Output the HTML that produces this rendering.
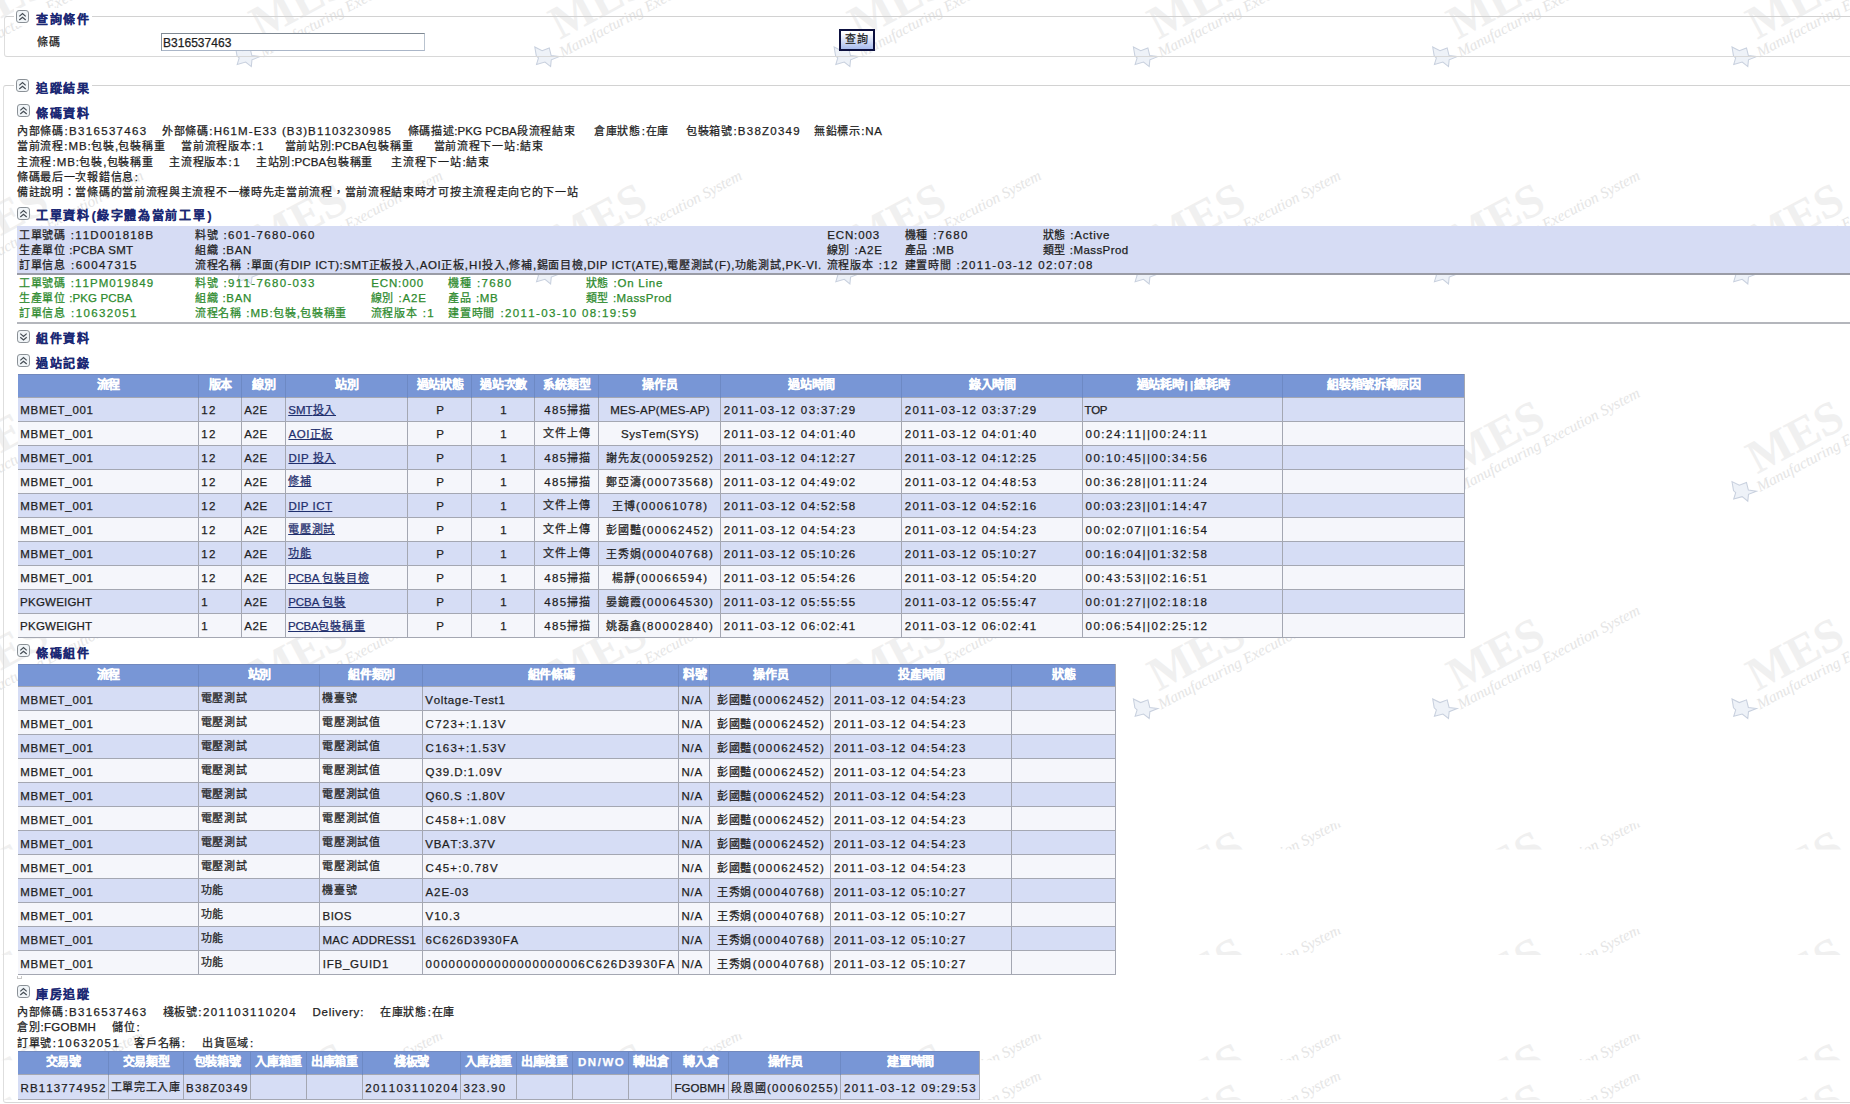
<!DOCTYPE html><html lang="zh-TW"><head><meta charset="utf-8"><style>
html,body{margin:0;padding:0;}
body{width:1850px;height:1104px;overflow:hidden;position:relative;background:#fff;font-family:"Liberation Sans",sans-serif;font-size:12px;color:#1e1e1e;font-kerning:none;}
.t{position:absolute;white-space:nowrap;line-height:14px;-webkit-text-stroke:0.25px currentColor;}
.t i{font-style:normal;}
.ic{position:absolute;}
.fs{position:absolute;border:1px solid #d2d2d2;border-left-color:#dedede;border-bottom-color:#d8d8d8;border-radius:3px;box-sizing:border-box;}
.lg{position:absolute;background:#fff;}
.inp{position:absolute;border:1px solid;border-color:#7f8993 #b9c3cf #aab6c8 #8a949e;background:#fff;}
.btn{position:absolute;border:2px solid #0d1140;background:linear-gradient(#ffffff 10%,#a8bcee);}
.th{position:absolute;background:#7896d6;box-shadow:inset 0 1px 0 #7289bd;}
.r1{position:absolute;background:#d6ddf5;}
.r2{position:absolute;background:#f5f6fb;}
.hl{position:absolute;height:1px;background:#a4a7b2;}
.vl{position:absolute;width:1px;background:#a4a7b2;}
.vlh{position:absolute;width:1px;background:#6d89c4;}
</style></head><body>
<svg style="position:absolute;left:0;top:0" width="1850" height="1104"><g transform="translate(-53.8 55.7) rotate(-28)"><g><text x="21" y="-7" font-family="Liberation Serif" font-weight="bold" font-size="47" letter-spacing="0" fill="#f0f0f0">MES</text><text x="15" y="10" font-family="Liberation Serif" font-style="italic" font-size="15.4" fill="#e5e5e5">Manufacturing Execution System</text><g fill="#eef2f8" stroke="#c8d0de" stroke-width="1.1" transform="scale(0.95)"><path d="M-8 -4 L-5 -13 L0 -6 L8 -5 L6 3 L13 8 L4 7 L0 13 L-3 6 L-12 4 L-7 -1 Z"/></g></g></g><g transform="translate(245.5 55.7) rotate(-28)"><g><text x="21" y="-7" font-family="Liberation Serif" font-weight="bold" font-size="47" letter-spacing="0" fill="#f0f0f0">MES</text><text x="15" y="10" font-family="Liberation Serif" font-style="italic" font-size="15.4" fill="#e5e5e5">Manufacturing Execution System</text><g fill="#eef2f8" stroke="#c8d0de" stroke-width="1.1" transform="scale(0.95)"><path d="M-8 -4 L-5 -13 L0 -6 L8 -5 L6 3 L13 8 L4 7 L0 13 L-3 6 L-12 4 L-7 -1 Z"/></g></g></g><g transform="translate(544.8 55.7) rotate(-28)"><g><text x="21" y="-7" font-family="Liberation Serif" font-weight="bold" font-size="47" letter-spacing="0" fill="#f0f0f0">MES</text><text x="15" y="10" font-family="Liberation Serif" font-style="italic" font-size="15.4" fill="#e5e5e5">Manufacturing Execution System</text><g fill="#eef2f8" stroke="#c8d0de" stroke-width="1.1" transform="scale(0.95)"><path d="M-8 -4 L-5 -13 L0 -6 L8 -5 L6 3 L13 8 L4 7 L0 13 L-3 6 L-12 4 L-7 -1 Z"/></g></g></g><g transform="translate(844.1 55.7) rotate(-28)"><g><text x="21" y="-7" font-family="Liberation Serif" font-weight="bold" font-size="47" letter-spacing="0" fill="#f0f0f0">MES</text><text x="15" y="10" font-family="Liberation Serif" font-style="italic" font-size="15.4" fill="#e5e5e5">Manufacturing Execution System</text><g fill="#eef2f8" stroke="#c8d0de" stroke-width="1.1" transform="scale(0.95)"><path d="M-8 -4 L-5 -13 L0 -6 L8 -5 L6 3 L13 8 L4 7 L0 13 L-3 6 L-12 4 L-7 -1 Z"/></g></g></g><g transform="translate(1143.4 55.7) rotate(-28)"><g><text x="21" y="-7" font-family="Liberation Serif" font-weight="bold" font-size="47" letter-spacing="0" fill="#f0f0f0">MES</text><text x="15" y="10" font-family="Liberation Serif" font-style="italic" font-size="15.4" fill="#e5e5e5">Manufacturing Execution System</text><g fill="#eef2f8" stroke="#c8d0de" stroke-width="1.1" transform="scale(0.95)"><path d="M-8 -4 L-5 -13 L0 -6 L8 -5 L6 3 L13 8 L4 7 L0 13 L-3 6 L-12 4 L-7 -1 Z"/></g></g></g><g transform="translate(1442.7 55.7) rotate(-28)"><g><text x="21" y="-7" font-family="Liberation Serif" font-weight="bold" font-size="47" letter-spacing="0" fill="#f0f0f0">MES</text><text x="15" y="10" font-family="Liberation Serif" font-style="italic" font-size="15.4" fill="#e5e5e5">Manufacturing Execution System</text><g fill="#eef2f8" stroke="#c8d0de" stroke-width="1.1" transform="scale(0.95)"><path d="M-8 -4 L-5 -13 L0 -6 L8 -5 L6 3 L13 8 L4 7 L0 13 L-3 6 L-12 4 L-7 -1 Z"/></g></g></g><g transform="translate(1742.0 55.7) rotate(-28)"><g><text x="21" y="-7" font-family="Liberation Serif" font-weight="bold" font-size="47" letter-spacing="0" fill="#f0f0f0">MES</text><text x="15" y="10" font-family="Liberation Serif" font-style="italic" font-size="15.4" fill="#e5e5e5">Manufacturing Execution System</text><g fill="#eef2f8" stroke="#c8d0de" stroke-width="1.1" transform="scale(0.95)"><path d="M-8 -4 L-5 -13 L0 -6 L8 -5 L6 3 L13 8 L4 7 L0 13 L-3 6 L-12 4 L-7 -1 Z"/></g></g></g><g transform="translate(-53.8 273.0) rotate(-28)"><g><text x="21" y="-7" font-family="Liberation Serif" font-weight="bold" font-size="47" letter-spacing="0" fill="#f0f0f0">MES</text><text x="15" y="10" font-family="Liberation Serif" font-style="italic" font-size="15.4" fill="#e5e5e5">Manufacturing Execution System</text><g fill="#eef2f8" stroke="#c8d0de" stroke-width="1.1" transform="scale(0.95)"><path d="M-8 -4 L-5 -13 L0 -6 L8 -5 L6 3 L13 8 L4 7 L0 13 L-3 6 L-12 4 L-7 -1 Z"/></g></g></g><g transform="translate(245.5 273.0) rotate(-28)"><g><text x="21" y="-7" font-family="Liberation Serif" font-weight="bold" font-size="47" letter-spacing="0" fill="#f0f0f0">MES</text><text x="15" y="10" font-family="Liberation Serif" font-style="italic" font-size="15.4" fill="#e5e5e5">Manufacturing Execution System</text><g fill="#eef2f8" stroke="#c8d0de" stroke-width="1.1" transform="scale(0.95)"><path d="M-8 -4 L-5 -13 L0 -6 L8 -5 L6 3 L13 8 L4 7 L0 13 L-3 6 L-12 4 L-7 -1 Z"/></g></g></g><g transform="translate(544.8 273.0) rotate(-28)"><g><text x="21" y="-7" font-family="Liberation Serif" font-weight="bold" font-size="47" letter-spacing="0" fill="#f0f0f0">MES</text><text x="15" y="10" font-family="Liberation Serif" font-style="italic" font-size="15.4" fill="#e5e5e5">Manufacturing Execution System</text><g fill="#eef2f8" stroke="#c8d0de" stroke-width="1.1" transform="scale(0.95)"><path d="M-8 -4 L-5 -13 L0 -6 L8 -5 L6 3 L13 8 L4 7 L0 13 L-3 6 L-12 4 L-7 -1 Z"/></g></g></g><g transform="translate(844.1 273.0) rotate(-28)"><g><text x="21" y="-7" font-family="Liberation Serif" font-weight="bold" font-size="47" letter-spacing="0" fill="#f0f0f0">MES</text><text x="15" y="10" font-family="Liberation Serif" font-style="italic" font-size="15.4" fill="#e5e5e5">Manufacturing Execution System</text><g fill="#eef2f8" stroke="#c8d0de" stroke-width="1.1" transform="scale(0.95)"><path d="M-8 -4 L-5 -13 L0 -6 L8 -5 L6 3 L13 8 L4 7 L0 13 L-3 6 L-12 4 L-7 -1 Z"/></g></g></g><g transform="translate(1143.4 273.0) rotate(-28)"><g><text x="21" y="-7" font-family="Liberation Serif" font-weight="bold" font-size="47" letter-spacing="0" fill="#f0f0f0">MES</text><text x="15" y="10" font-family="Liberation Serif" font-style="italic" font-size="15.4" fill="#e5e5e5">Manufacturing Execution System</text><g fill="#eef2f8" stroke="#c8d0de" stroke-width="1.1" transform="scale(0.95)"><path d="M-8 -4 L-5 -13 L0 -6 L8 -5 L6 3 L13 8 L4 7 L0 13 L-3 6 L-12 4 L-7 -1 Z"/></g></g></g><g transform="translate(1442.7 273.0) rotate(-28)"><g><text x="21" y="-7" font-family="Liberation Serif" font-weight="bold" font-size="47" letter-spacing="0" fill="#f0f0f0">MES</text><text x="15" y="10" font-family="Liberation Serif" font-style="italic" font-size="15.4" fill="#e5e5e5">Manufacturing Execution System</text><g fill="#eef2f8" stroke="#c8d0de" stroke-width="1.1" transform="scale(0.95)"><path d="M-8 -4 L-5 -13 L0 -6 L8 -5 L6 3 L13 8 L4 7 L0 13 L-3 6 L-12 4 L-7 -1 Z"/></g></g></g><g transform="translate(1742.0 273.0) rotate(-28)"><g><text x="21" y="-7" font-family="Liberation Serif" font-weight="bold" font-size="47" letter-spacing="0" fill="#f0f0f0">MES</text><text x="15" y="10" font-family="Liberation Serif" font-style="italic" font-size="15.4" fill="#e5e5e5">Manufacturing Execution System</text><g fill="#eef2f8" stroke="#c8d0de" stroke-width="1.1" transform="scale(0.95)"><path d="M-8 -4 L-5 -13 L0 -6 L8 -5 L6 3 L13 8 L4 7 L0 13 L-3 6 L-12 4 L-7 -1 Z"/></g></g></g><g transform="translate(-53.8 490.3) rotate(-28)"><g><text x="21" y="-7" font-family="Liberation Serif" font-weight="bold" font-size="47" letter-spacing="0" fill="#f0f0f0">MES</text><text x="15" y="10" font-family="Liberation Serif" font-style="italic" font-size="15.4" fill="#e5e5e5">Manufacturing Execution System</text><g fill="#eef2f8" stroke="#c8d0de" stroke-width="1.1" transform="scale(0.95)"><path d="M-8 -4 L-5 -13 L0 -6 L8 -5 L6 3 L13 8 L4 7 L0 13 L-3 6 L-12 4 L-7 -1 Z"/></g></g></g><g transform="translate(245.5 490.3) rotate(-28)"><g><text x="21" y="-7" font-family="Liberation Serif" font-weight="bold" font-size="47" letter-spacing="0" fill="#f0f0f0">MES</text><text x="15" y="10" font-family="Liberation Serif" font-style="italic" font-size="15.4" fill="#e5e5e5">Manufacturing Execution System</text><g fill="#eef2f8" stroke="#c8d0de" stroke-width="1.1" transform="scale(0.95)"><path d="M-8 -4 L-5 -13 L0 -6 L8 -5 L6 3 L13 8 L4 7 L0 13 L-3 6 L-12 4 L-7 -1 Z"/></g></g></g><g transform="translate(544.8 490.3) rotate(-28)"><g><text x="21" y="-7" font-family="Liberation Serif" font-weight="bold" font-size="47" letter-spacing="0" fill="#f0f0f0">MES</text><text x="15" y="10" font-family="Liberation Serif" font-style="italic" font-size="15.4" fill="#e5e5e5">Manufacturing Execution System</text><g fill="#eef2f8" stroke="#c8d0de" stroke-width="1.1" transform="scale(0.95)"><path d="M-8 -4 L-5 -13 L0 -6 L8 -5 L6 3 L13 8 L4 7 L0 13 L-3 6 L-12 4 L-7 -1 Z"/></g></g></g><g transform="translate(844.1 490.3) rotate(-28)"><g><text x="21" y="-7" font-family="Liberation Serif" font-weight="bold" font-size="47" letter-spacing="0" fill="#f0f0f0">MES</text><text x="15" y="10" font-family="Liberation Serif" font-style="italic" font-size="15.4" fill="#e5e5e5">Manufacturing Execution System</text><g fill="#eef2f8" stroke="#c8d0de" stroke-width="1.1" transform="scale(0.95)"><path d="M-8 -4 L-5 -13 L0 -6 L8 -5 L6 3 L13 8 L4 7 L0 13 L-3 6 L-12 4 L-7 -1 Z"/></g></g></g><g transform="translate(1143.4 490.3) rotate(-28)"><g><text x="21" y="-7" font-family="Liberation Serif" font-weight="bold" font-size="47" letter-spacing="0" fill="#f0f0f0">MES</text><text x="15" y="10" font-family="Liberation Serif" font-style="italic" font-size="15.4" fill="#e5e5e5">Manufacturing Execution System</text><g fill="#eef2f8" stroke="#c8d0de" stroke-width="1.1" transform="scale(0.95)"><path d="M-8 -4 L-5 -13 L0 -6 L8 -5 L6 3 L13 8 L4 7 L0 13 L-3 6 L-12 4 L-7 -1 Z"/></g></g></g><g transform="translate(1442.7 490.3) rotate(-28)"><g><text x="21" y="-7" font-family="Liberation Serif" font-weight="bold" font-size="47" letter-spacing="0" fill="#f0f0f0">MES</text><text x="15" y="10" font-family="Liberation Serif" font-style="italic" font-size="15.4" fill="#e5e5e5">Manufacturing Execution System</text><g fill="#eef2f8" stroke="#c8d0de" stroke-width="1.1" transform="scale(0.95)"><path d="M-8 -4 L-5 -13 L0 -6 L8 -5 L6 3 L13 8 L4 7 L0 13 L-3 6 L-12 4 L-7 -1 Z"/></g></g></g><g transform="translate(1742.0 490.3) rotate(-28)"><g><text x="21" y="-7" font-family="Liberation Serif" font-weight="bold" font-size="47" letter-spacing="0" fill="#f0f0f0">MES</text><text x="15" y="10" font-family="Liberation Serif" font-style="italic" font-size="15.4" fill="#e5e5e5">Manufacturing Execution System</text><g fill="#eef2f8" stroke="#c8d0de" stroke-width="1.1" transform="scale(0.95)"><path d="M-8 -4 L-5 -13 L0 -6 L8 -5 L6 3 L13 8 L4 7 L0 13 L-3 6 L-12 4 L-7 -1 Z"/></g></g></g><g transform="translate(-53.8 707.6) rotate(-28)"><g><text x="21" y="-7" font-family="Liberation Serif" font-weight="bold" font-size="47" letter-spacing="0" fill="#f0f0f0">MES</text><text x="15" y="10" font-family="Liberation Serif" font-style="italic" font-size="15.4" fill="#e5e5e5">Manufacturing Execution System</text><g fill="#eef2f8" stroke="#c8d0de" stroke-width="1.1" transform="scale(0.95)"><path d="M-8 -4 L-5 -13 L0 -6 L8 -5 L6 3 L13 8 L4 7 L0 13 L-3 6 L-12 4 L-7 -1 Z"/></g></g></g><g transform="translate(245.5 707.6) rotate(-28)"><g><text x="21" y="-7" font-family="Liberation Serif" font-weight="bold" font-size="47" letter-spacing="0" fill="#f0f0f0">MES</text><text x="15" y="10" font-family="Liberation Serif" font-style="italic" font-size="15.4" fill="#e5e5e5">Manufacturing Execution System</text><g fill="#eef2f8" stroke="#c8d0de" stroke-width="1.1" transform="scale(0.95)"><path d="M-8 -4 L-5 -13 L0 -6 L8 -5 L6 3 L13 8 L4 7 L0 13 L-3 6 L-12 4 L-7 -1 Z"/></g></g></g><g transform="translate(544.8 707.6) rotate(-28)"><g><text x="21" y="-7" font-family="Liberation Serif" font-weight="bold" font-size="47" letter-spacing="0" fill="#f0f0f0">MES</text><text x="15" y="10" font-family="Liberation Serif" font-style="italic" font-size="15.4" fill="#e5e5e5">Manufacturing Execution System</text><g fill="#eef2f8" stroke="#c8d0de" stroke-width="1.1" transform="scale(0.95)"><path d="M-8 -4 L-5 -13 L0 -6 L8 -5 L6 3 L13 8 L4 7 L0 13 L-3 6 L-12 4 L-7 -1 Z"/></g></g></g><g transform="translate(844.1 707.6) rotate(-28)"><g><text x="21" y="-7" font-family="Liberation Serif" font-weight="bold" font-size="47" letter-spacing="0" fill="#f0f0f0">MES</text><text x="15" y="10" font-family="Liberation Serif" font-style="italic" font-size="15.4" fill="#e5e5e5">Manufacturing Execution System</text><g fill="#eef2f8" stroke="#c8d0de" stroke-width="1.1" transform="scale(0.95)"><path d="M-8 -4 L-5 -13 L0 -6 L8 -5 L6 3 L13 8 L4 7 L0 13 L-3 6 L-12 4 L-7 -1 Z"/></g></g></g><g transform="translate(1143.4 707.6) rotate(-28)"><g><text x="21" y="-7" font-family="Liberation Serif" font-weight="bold" font-size="47" letter-spacing="0" fill="#f0f0f0">MES</text><text x="15" y="10" font-family="Liberation Serif" font-style="italic" font-size="15.4" fill="#e5e5e5">Manufacturing Execution System</text><g fill="#eef2f8" stroke="#c8d0de" stroke-width="1.1" transform="scale(0.95)"><path d="M-8 -4 L-5 -13 L0 -6 L8 -5 L6 3 L13 8 L4 7 L0 13 L-3 6 L-12 4 L-7 -1 Z"/></g></g></g><g transform="translate(1442.7 707.6) rotate(-28)"><g><text x="21" y="-7" font-family="Liberation Serif" font-weight="bold" font-size="47" letter-spacing="0" fill="#f0f0f0">MES</text><text x="15" y="10" font-family="Liberation Serif" font-style="italic" font-size="15.4" fill="#e5e5e5">Manufacturing Execution System</text><g fill="#eef2f8" stroke="#c8d0de" stroke-width="1.1" transform="scale(0.95)"><path d="M-8 -4 L-5 -13 L0 -6 L8 -5 L6 3 L13 8 L4 7 L0 13 L-3 6 L-12 4 L-7 -1 Z"/></g></g></g><g transform="translate(1742.0 707.6) rotate(-28)"><g><text x="21" y="-7" font-family="Liberation Serif" font-weight="bold" font-size="47" letter-spacing="0" fill="#f0f0f0">MES</text><text x="15" y="10" font-family="Liberation Serif" font-style="italic" font-size="15.4" fill="#e5e5e5">Manufacturing Execution System</text><g fill="#eef2f8" stroke="#c8d0de" stroke-width="1.1" transform="scale(0.95)"><path d="M-8 -4 L-5 -13 L0 -6 L8 -5 L6 3 L13 8 L4 7 L0 13 L-3 6 L-12 4 L-7 -1 Z"/></g></g></g><svg x="0" y="823.4" width="1850" height="26" overflow="hidden"><g transform="translate(0 -823.4)"><g transform="translate(-53.8 920.5) rotate(-28)"><g><text x="21" y="-7" font-family="Liberation Serif" font-weight="bold" font-size="47" letter-spacing="0" fill="#f0f0f0">MES</text><text x="15" y="10" font-family="Liberation Serif" font-style="italic" font-size="15.4" fill="#e5e5e5">Manufacturing Execution System</text><g fill="#eef2f8" stroke="#c8d0de" stroke-width="1.1" transform="scale(0.95)"><path d="M-8 -4 L-5 -13 L0 -6 L8 -5 L6 3 L13 8 L4 7 L0 13 L-3 6 L-12 4 L-7 -1 Z"/></g></g></g><g transform="translate(245.5 920.5) rotate(-28)"><g><text x="21" y="-7" font-family="Liberation Serif" font-weight="bold" font-size="47" letter-spacing="0" fill="#f0f0f0">MES</text><text x="15" y="10" font-family="Liberation Serif" font-style="italic" font-size="15.4" fill="#e5e5e5">Manufacturing Execution System</text><g fill="#eef2f8" stroke="#c8d0de" stroke-width="1.1" transform="scale(0.95)"><path d="M-8 -4 L-5 -13 L0 -6 L8 -5 L6 3 L13 8 L4 7 L0 13 L-3 6 L-12 4 L-7 -1 Z"/></g></g></g><g transform="translate(544.8 920.5) rotate(-28)"><g><text x="21" y="-7" font-family="Liberation Serif" font-weight="bold" font-size="47" letter-spacing="0" fill="#f0f0f0">MES</text><text x="15" y="10" font-family="Liberation Serif" font-style="italic" font-size="15.4" fill="#e5e5e5">Manufacturing Execution System</text><g fill="#eef2f8" stroke="#c8d0de" stroke-width="1.1" transform="scale(0.95)"><path d="M-8 -4 L-5 -13 L0 -6 L8 -5 L6 3 L13 8 L4 7 L0 13 L-3 6 L-12 4 L-7 -1 Z"/></g></g></g><g transform="translate(844.1 920.5) rotate(-28)"><g><text x="21" y="-7" font-family="Liberation Serif" font-weight="bold" font-size="47" letter-spacing="0" fill="#f0f0f0">MES</text><text x="15" y="10" font-family="Liberation Serif" font-style="italic" font-size="15.4" fill="#e5e5e5">Manufacturing Execution System</text><g fill="#eef2f8" stroke="#c8d0de" stroke-width="1.1" transform="scale(0.95)"><path d="M-8 -4 L-5 -13 L0 -6 L8 -5 L6 3 L13 8 L4 7 L0 13 L-3 6 L-12 4 L-7 -1 Z"/></g></g></g><g transform="translate(1143.4 920.5) rotate(-28)"><g><text x="21" y="-7" font-family="Liberation Serif" font-weight="bold" font-size="47" letter-spacing="0" fill="#f0f0f0">MES</text><text x="15" y="10" font-family="Liberation Serif" font-style="italic" font-size="15.4" fill="#e5e5e5">Manufacturing Execution System</text><g fill="#eef2f8" stroke="#c8d0de" stroke-width="1.1" transform="scale(0.95)"><path d="M-8 -4 L-5 -13 L0 -6 L8 -5 L6 3 L13 8 L4 7 L0 13 L-3 6 L-12 4 L-7 -1 Z"/></g></g></g><g transform="translate(1442.7 920.5) rotate(-28)"><g><text x="21" y="-7" font-family="Liberation Serif" font-weight="bold" font-size="47" letter-spacing="0" fill="#f0f0f0">MES</text><text x="15" y="10" font-family="Liberation Serif" font-style="italic" font-size="15.4" fill="#e5e5e5">Manufacturing Execution System</text><g fill="#eef2f8" stroke="#c8d0de" stroke-width="1.1" transform="scale(0.95)"><path d="M-8 -4 L-5 -13 L0 -6 L8 -5 L6 3 L13 8 L4 7 L0 13 L-3 6 L-12 4 L-7 -1 Z"/></g></g></g><g transform="translate(1742.0 920.5) rotate(-28)"><g><text x="21" y="-7" font-family="Liberation Serif" font-weight="bold" font-size="47" letter-spacing="0" fill="#f0f0f0">MES</text><text x="15" y="10" font-family="Liberation Serif" font-style="italic" font-size="15.4" fill="#e5e5e5">Manufacturing Execution System</text><g fill="#eef2f8" stroke="#c8d0de" stroke-width="1.1" transform="scale(0.95)"><path d="M-8 -4 L-5 -13 L0 -6 L8 -5 L6 3 L13 8 L4 7 L0 13 L-3 6 L-12 4 L-7 -1 Z"/></g></g></g></g></svg><svg x="0" y="929.0" width="1850" height="26" overflow="hidden"><g transform="translate(0 -929.0)"><g transform="translate(-53.8 1027.1) rotate(-28)"><g><text x="21" y="-7" font-family="Liberation Serif" font-weight="bold" font-size="47" letter-spacing="0" fill="#f0f0f0">MES</text><text x="15" y="10" font-family="Liberation Serif" font-style="italic" font-size="15.4" fill="#e5e5e5">Manufacturing Execution System</text><g fill="#eef2f8" stroke="#c8d0de" stroke-width="1.1" transform="scale(0.95)"><path d="M-8 -4 L-5 -13 L0 -6 L8 -5 L6 3 L13 8 L4 7 L0 13 L-3 6 L-12 4 L-7 -1 Z"/></g></g></g><g transform="translate(245.5 1027.1) rotate(-28)"><g><text x="21" y="-7" font-family="Liberation Serif" font-weight="bold" font-size="47" letter-spacing="0" fill="#f0f0f0">MES</text><text x="15" y="10" font-family="Liberation Serif" font-style="italic" font-size="15.4" fill="#e5e5e5">Manufacturing Execution System</text><g fill="#eef2f8" stroke="#c8d0de" stroke-width="1.1" transform="scale(0.95)"><path d="M-8 -4 L-5 -13 L0 -6 L8 -5 L6 3 L13 8 L4 7 L0 13 L-3 6 L-12 4 L-7 -1 Z"/></g></g></g><g transform="translate(544.8 1027.1) rotate(-28)"><g><text x="21" y="-7" font-family="Liberation Serif" font-weight="bold" font-size="47" letter-spacing="0" fill="#f0f0f0">MES</text><text x="15" y="10" font-family="Liberation Serif" font-style="italic" font-size="15.4" fill="#e5e5e5">Manufacturing Execution System</text><g fill="#eef2f8" stroke="#c8d0de" stroke-width="1.1" transform="scale(0.95)"><path d="M-8 -4 L-5 -13 L0 -6 L8 -5 L6 3 L13 8 L4 7 L0 13 L-3 6 L-12 4 L-7 -1 Z"/></g></g></g><g transform="translate(844.1 1027.1) rotate(-28)"><g><text x="21" y="-7" font-family="Liberation Serif" font-weight="bold" font-size="47" letter-spacing="0" fill="#f0f0f0">MES</text><text x="15" y="10" font-family="Liberation Serif" font-style="italic" font-size="15.4" fill="#e5e5e5">Manufacturing Execution System</text><g fill="#eef2f8" stroke="#c8d0de" stroke-width="1.1" transform="scale(0.95)"><path d="M-8 -4 L-5 -13 L0 -6 L8 -5 L6 3 L13 8 L4 7 L0 13 L-3 6 L-12 4 L-7 -1 Z"/></g></g></g><g transform="translate(1143.4 1027.1) rotate(-28)"><g><text x="21" y="-7" font-family="Liberation Serif" font-weight="bold" font-size="47" letter-spacing="0" fill="#f0f0f0">MES</text><text x="15" y="10" font-family="Liberation Serif" font-style="italic" font-size="15.4" fill="#e5e5e5">Manufacturing Execution System</text><g fill="#eef2f8" stroke="#c8d0de" stroke-width="1.1" transform="scale(0.95)"><path d="M-8 -4 L-5 -13 L0 -6 L8 -5 L6 3 L13 8 L4 7 L0 13 L-3 6 L-12 4 L-7 -1 Z"/></g></g></g><g transform="translate(1442.7 1027.1) rotate(-28)"><g><text x="21" y="-7" font-family="Liberation Serif" font-weight="bold" font-size="47" letter-spacing="0" fill="#f0f0f0">MES</text><text x="15" y="10" font-family="Liberation Serif" font-style="italic" font-size="15.4" fill="#e5e5e5">Manufacturing Execution System</text><g fill="#eef2f8" stroke="#c8d0de" stroke-width="1.1" transform="scale(0.95)"><path d="M-8 -4 L-5 -13 L0 -6 L8 -5 L6 3 L13 8 L4 7 L0 13 L-3 6 L-12 4 L-7 -1 Z"/></g></g></g><g transform="translate(1742.0 1027.1) rotate(-28)"><g><text x="21" y="-7" font-family="Liberation Serif" font-weight="bold" font-size="47" letter-spacing="0" fill="#f0f0f0">MES</text><text x="15" y="10" font-family="Liberation Serif" font-style="italic" font-size="15.4" fill="#e5e5e5">Manufacturing Execution System</text><g fill="#eef2f8" stroke="#c8d0de" stroke-width="1.1" transform="scale(0.95)"><path d="M-8 -4 L-5 -13 L0 -6 L8 -5 L6 3 L13 8 L4 7 L0 13 L-3 6 L-12 4 L-7 -1 Z"/></g></g></g></g></svg><svg x="0" y="1034.3" width="1850" height="26" overflow="hidden"><g transform="translate(0 -1034.3)"><g transform="translate(-53.8 1132.5) rotate(-28)"><g><text x="21" y="-7" font-family="Liberation Serif" font-weight="bold" font-size="47" letter-spacing="0" fill="#f0f0f0">MES</text><text x="15" y="10" font-family="Liberation Serif" font-style="italic" font-size="15.4" fill="#e5e5e5">Manufacturing Execution System</text><g fill="#eef2f8" stroke="#c8d0de" stroke-width="1.1" transform="scale(0.95)"><path d="M-8 -4 L-5 -13 L0 -6 L8 -5 L6 3 L13 8 L4 7 L0 13 L-3 6 L-12 4 L-7 -1 Z"/></g></g></g><g transform="translate(245.5 1132.5) rotate(-28)"><g><text x="21" y="-7" font-family="Liberation Serif" font-weight="bold" font-size="47" letter-spacing="0" fill="#f0f0f0">MES</text><text x="15" y="10" font-family="Liberation Serif" font-style="italic" font-size="15.4" fill="#e5e5e5">Manufacturing Execution System</text><g fill="#eef2f8" stroke="#c8d0de" stroke-width="1.1" transform="scale(0.95)"><path d="M-8 -4 L-5 -13 L0 -6 L8 -5 L6 3 L13 8 L4 7 L0 13 L-3 6 L-12 4 L-7 -1 Z"/></g></g></g><g transform="translate(544.8 1132.5) rotate(-28)"><g><text x="21" y="-7" font-family="Liberation Serif" font-weight="bold" font-size="47" letter-spacing="0" fill="#f0f0f0">MES</text><text x="15" y="10" font-family="Liberation Serif" font-style="italic" font-size="15.4" fill="#e5e5e5">Manufacturing Execution System</text><g fill="#eef2f8" stroke="#c8d0de" stroke-width="1.1" transform="scale(0.95)"><path d="M-8 -4 L-5 -13 L0 -6 L8 -5 L6 3 L13 8 L4 7 L0 13 L-3 6 L-12 4 L-7 -1 Z"/></g></g></g><g transform="translate(844.1 1132.5) rotate(-28)"><g><text x="21" y="-7" font-family="Liberation Serif" font-weight="bold" font-size="47" letter-spacing="0" fill="#f0f0f0">MES</text><text x="15" y="10" font-family="Liberation Serif" font-style="italic" font-size="15.4" fill="#e5e5e5">Manufacturing Execution System</text><g fill="#eef2f8" stroke="#c8d0de" stroke-width="1.1" transform="scale(0.95)"><path d="M-8 -4 L-5 -13 L0 -6 L8 -5 L6 3 L13 8 L4 7 L0 13 L-3 6 L-12 4 L-7 -1 Z"/></g></g></g><g transform="translate(1143.4 1132.5) rotate(-28)"><g><text x="21" y="-7" font-family="Liberation Serif" font-weight="bold" font-size="47" letter-spacing="0" fill="#f0f0f0">MES</text><text x="15" y="10" font-family="Liberation Serif" font-style="italic" font-size="15.4" fill="#e5e5e5">Manufacturing Execution System</text><g fill="#eef2f8" stroke="#c8d0de" stroke-width="1.1" transform="scale(0.95)"><path d="M-8 -4 L-5 -13 L0 -6 L8 -5 L6 3 L13 8 L4 7 L0 13 L-3 6 L-12 4 L-7 -1 Z"/></g></g></g><g transform="translate(1442.7 1132.5) rotate(-28)"><g><text x="21" y="-7" font-family="Liberation Serif" font-weight="bold" font-size="47" letter-spacing="0" fill="#f0f0f0">MES</text><text x="15" y="10" font-family="Liberation Serif" font-style="italic" font-size="15.4" fill="#e5e5e5">Manufacturing Execution System</text><g fill="#eef2f8" stroke="#c8d0de" stroke-width="1.1" transform="scale(0.95)"><path d="M-8 -4 L-5 -13 L0 -6 L8 -5 L6 3 L13 8 L4 7 L0 13 L-3 6 L-12 4 L-7 -1 Z"/></g></g></g><g transform="translate(1742.0 1132.5) rotate(-28)"><g><text x="21" y="-7" font-family="Liberation Serif" font-weight="bold" font-size="47" letter-spacing="0" fill="#f0f0f0">MES</text><text x="15" y="10" font-family="Liberation Serif" font-style="italic" font-size="15.4" fill="#e5e5e5">Manufacturing Execution System</text><g fill="#eef2f8" stroke="#c8d0de" stroke-width="1.1" transform="scale(0.95)"><path d="M-8 -4 L-5 -13 L0 -6 L8 -5 L6 3 L13 8 L4 7 L0 13 L-3 6 L-12 4 L-7 -1 Z"/></g></g></g></g></svg><svg x="0" y="1074.0" width="1850" height="26" overflow="hidden"><g transform="translate(0 -1074.0)"><g transform="translate(-53.8 1173.0) rotate(-28)"><g><text x="21" y="-7" font-family="Liberation Serif" font-weight="bold" font-size="47" letter-spacing="0" fill="#f0f0f0">MES</text><text x="15" y="10" font-family="Liberation Serif" font-style="italic" font-size="15.4" fill="#e5e5e5">Manufacturing Execution System</text><g fill="#eef2f8" stroke="#c8d0de" stroke-width="1.1" transform="scale(0.95)"><path d="M-8 -4 L-5 -13 L0 -6 L8 -5 L6 3 L13 8 L4 7 L0 13 L-3 6 L-12 4 L-7 -1 Z"/></g></g></g><g transform="translate(245.5 1173.0) rotate(-28)"><g><text x="21" y="-7" font-family="Liberation Serif" font-weight="bold" font-size="47" letter-spacing="0" fill="#f0f0f0">MES</text><text x="15" y="10" font-family="Liberation Serif" font-style="italic" font-size="15.4" fill="#e5e5e5">Manufacturing Execution System</text><g fill="#eef2f8" stroke="#c8d0de" stroke-width="1.1" transform="scale(0.95)"><path d="M-8 -4 L-5 -13 L0 -6 L8 -5 L6 3 L13 8 L4 7 L0 13 L-3 6 L-12 4 L-7 -1 Z"/></g></g></g><g transform="translate(544.8 1173.0) rotate(-28)"><g><text x="21" y="-7" font-family="Liberation Serif" font-weight="bold" font-size="47" letter-spacing="0" fill="#f0f0f0">MES</text><text x="15" y="10" font-family="Liberation Serif" font-style="italic" font-size="15.4" fill="#e5e5e5">Manufacturing Execution System</text><g fill="#eef2f8" stroke="#c8d0de" stroke-width="1.1" transform="scale(0.95)"><path d="M-8 -4 L-5 -13 L0 -6 L8 -5 L6 3 L13 8 L4 7 L0 13 L-3 6 L-12 4 L-7 -1 Z"/></g></g></g><g transform="translate(844.1 1173.0) rotate(-28)"><g><text x="21" y="-7" font-family="Liberation Serif" font-weight="bold" font-size="47" letter-spacing="0" fill="#f0f0f0">MES</text><text x="15" y="10" font-family="Liberation Serif" font-style="italic" font-size="15.4" fill="#e5e5e5">Manufacturing Execution System</text><g fill="#eef2f8" stroke="#c8d0de" stroke-width="1.1" transform="scale(0.95)"><path d="M-8 -4 L-5 -13 L0 -6 L8 -5 L6 3 L13 8 L4 7 L0 13 L-3 6 L-12 4 L-7 -1 Z"/></g></g></g><g transform="translate(1143.4 1173.0) rotate(-28)"><g><text x="21" y="-7" font-family="Liberation Serif" font-weight="bold" font-size="47" letter-spacing="0" fill="#f0f0f0">MES</text><text x="15" y="10" font-family="Liberation Serif" font-style="italic" font-size="15.4" fill="#e5e5e5">Manufacturing Execution System</text><g fill="#eef2f8" stroke="#c8d0de" stroke-width="1.1" transform="scale(0.95)"><path d="M-8 -4 L-5 -13 L0 -6 L8 -5 L6 3 L13 8 L4 7 L0 13 L-3 6 L-12 4 L-7 -1 Z"/></g></g></g><g transform="translate(1442.7 1173.0) rotate(-28)"><g><text x="21" y="-7" font-family="Liberation Serif" font-weight="bold" font-size="47" letter-spacing="0" fill="#f0f0f0">MES</text><text x="15" y="10" font-family="Liberation Serif" font-style="italic" font-size="15.4" fill="#e5e5e5">Manufacturing Execution System</text><g fill="#eef2f8" stroke="#c8d0de" stroke-width="1.1" transform="scale(0.95)"><path d="M-8 -4 L-5 -13 L0 -6 L8 -5 L6 3 L13 8 L4 7 L0 13 L-3 6 L-12 4 L-7 -1 Z"/></g></g></g><g transform="translate(1742.0 1173.0) rotate(-28)"><g><text x="21" y="-7" font-family="Liberation Serif" font-weight="bold" font-size="47" letter-spacing="0" fill="#f0f0f0">MES</text><text x="15" y="10" font-family="Liberation Serif" font-style="italic" font-size="15.4" fill="#e5e5e5">Manufacturing Execution System</text><g fill="#eef2f8" stroke="#c8d0de" stroke-width="1.1" transform="scale(0.95)"><path d="M-8 -4 L-5 -13 L0 -6 L8 -5 L6 3 L13 8 L4 7 L0 13 L-3 6 L-12 4 L-7 -1 Z"/></g></g></g></g></svg></svg>
<div class="fs" style="left:4px;top:16px;width:1900px;height:41px"></div>
<div class="lg" style="left:14px;top:8px;width:78px;height:18px"></div>
<svg class="ic" style="left:16.2px;top:10px" width="13" height="13" viewBox="0 0 13 13"><rect x="0.5" y="0.5" width="12" height="12" rx="2.6" fill="#f1f5f8" stroke="#8a9096"/><path d="M3.3 6.4 L6.5 3.6 L9.7 6.4 M3.3 10 L6.5 7.2 L9.7 10" fill="none" stroke="#434a52" stroke-width="1.15"/></svg>
<div class="t h" style="left:36.00px;top:13.45px;font-size:13.42px;font-weight:bold;color:#1b2874;-webkit-text-stroke:0.15px currentColor;"><i style="display:inline-block;width:54.60px;font-size:12px;letter-spacing:1.65px">查詢條件</i></div>
<div class="t" style="left:37.30px;top:34.91px;font-size:11.50px;"><i style="display:inline-block;width:23.40px;font-size:11px;letter-spacing:0.70px">條碼</i></div>
<div class="inp" style="left:161px;top:33px;width:262px;height:16px"></div>
<div class="t" style="left:163px;top:35.64px;letter-spacing:0.03px">B316537463</div>
<div class="btn" style="left:839px;top:29px;width:32px;height:18px"></div>
<div class="t" style="left:845.00px;top:32.41px;font-size:11.50px;"><i style="display:inline-block;width:23.40px;font-size:11px;letter-spacing:0.70px">查詢</i></div>
<div class="fs" style="left:3px;top:85px;width:1900px;height:1018px"></div>
<div class="lg" style="left:14px;top:77px;width:78px;height:18px"></div>
<svg class="ic" style="left:16.3px;top:79px" width="13" height="13" viewBox="0 0 13 13"><rect x="0.5" y="0.5" width="12" height="12" rx="2.6" fill="#f1f5f8" stroke="#8a9096"/><path d="M3.3 6.4 L6.5 3.6 L9.7 6.4 M3.3 10 L6.5 7.2 L9.7 10" fill="none" stroke="#434a52" stroke-width="1.15"/></svg>
<div class="t h" style="left:36.00px;top:82.35px;font-size:13.42px;font-weight:bold;color:#1b2874;-webkit-text-stroke:0.15px currentColor;"><i style="display:inline-block;width:54.60px;font-size:12px;letter-spacing:1.65px">追蹤結果</i></div>
<svg class="ic" style="left:17px;top:104px" width="13" height="13" viewBox="0 0 13 13"><rect x="0.5" y="0.5" width="12" height="12" rx="2.6" fill="#f1f5f8" stroke="#8a9096"/><path d="M3.3 6.4 L6.5 3.6 L9.7 6.4 M3.3 10 L6.5 7.2 L9.7 10" fill="none" stroke="#434a52" stroke-width="1.15"/></svg>
<div class="t h" style="left:36.00px;top:106.85px;font-size:13.42px;font-weight:bold;color:#1b2874;-webkit-text-stroke:0.15px currentColor;"><i style="display:inline-block;width:54.60px;font-size:12px;letter-spacing:1.65px">條碼資料</i></div>
<div class="t" style="left:17.00px;top:124.01px;font-size:11.50px;"><i style="display:inline-block;width:46.80px;font-size:11px;letter-spacing:0.70px">內部條碼</i><span style="letter-spacing:1.33px;margin-left:0.66px;margin-right:-0.66px">:B316537463</span></div>
<div class="t" style="left:162.00px;top:124.01px;font-size:11.50px;"><i style="display:inline-block;width:46.80px;font-size:11px;letter-spacing:0.70px">外部條碼</i><span style="letter-spacing:1.12px;margin-left:0.56px;margin-right:-0.56px">:H61M-E33&nbsp;(B3)B1103230985</span></div>
<div class="t" style="left:407.50px;top:124.01px;font-size:11.50px;"><i style="display:inline-block;width:46.80px;font-size:11px;letter-spacing:0.70px">條碼描述</i><span style="letter-spacing:0.06px;margin-left:0.03px;margin-right:-0.03px">:PKG&nbsp;PCBA</span><i style="display:inline-block;width:58.50px;font-size:11px;letter-spacing:0.70px">段流程結束</i></div>
<div class="t" style="left:594.00px;top:124.01px;font-size:11.50px;"><i style="display:inline-block;width:46.80px;font-size:11px;letter-spacing:0.70px">倉庫狀態</i><span style="letter-spacing:1.69px;margin-left:0.84px;margin-right:-0.84px">:</span><i style="display:inline-block;width:23.40px;font-size:11px;letter-spacing:0.70px">在庫</i></div>
<div class="t" style="left:686.00px;top:124.01px;font-size:11.50px;"><i style="display:inline-block;width:46.80px;font-size:11px;letter-spacing:0.70px">包裝箱號</i><span style="letter-spacing:1.24px;margin-left:0.62px;margin-right:-0.62px">:B38Z0349</span></div>
<div class="t" style="left:814.00px;top:124.01px;font-size:11.50px;"><i style="display:inline-block;width:46.80px;font-size:11px;letter-spacing:0.70px">無鉛標示</i><span style="letter-spacing:0.77px;margin-left:0.39px;margin-right:-0.39px">:NA</span></div>
<div class="t" style="left:17.00px;top:139.34px;font-size:11.50px;"><i style="display:inline-block;width:46.80px;font-size:11px;letter-spacing:0.70px">當前流程</i><span style="letter-spacing:0.93px;margin-left:0.46px;margin-right:-0.46px">:MB:</span><i style="display:inline-block;width:23.40px;font-size:11px;letter-spacing:0.70px">包裝</i><span style="letter-spacing:0.71px;margin-left:0.36px;margin-right:-0.36px">,</span><i style="display:inline-block;width:46.80px;font-size:11px;letter-spacing:0.70px">包裝稱重</i></div>
<div class="t" style="left:181.30px;top:139.34px;font-size:11.50px;"><i style="display:inline-block;width:70.20px;font-size:11px;letter-spacing:0.70px">當前流程版本</i><span style="letter-spacing:1.56px;margin-left:0.78px;margin-right:-0.78px">:1</span></div>
<div class="t" style="left:284.50px;top:139.34px;font-size:11.50px;"><i style="display:inline-block;width:46.80px;font-size:11px;letter-spacing:0.70px">當前站別</i><span style="letter-spacing:0.13px;margin-left:0.07px;margin-right:-0.07px">:PCBA</span><i style="display:inline-block;width:46.80px;font-size:11px;letter-spacing:0.70px">包裝稱重</i></div>
<div class="t" style="left:433.60px;top:139.34px;font-size:11.50px;"><i style="display:inline-block;width:81.90px;font-size:11px;letter-spacing:0.70px">當前流程下一站</i><span style="letter-spacing:1.69px;margin-left:0.84px;margin-right:-0.84px">:</span><i style="display:inline-block;width:23.40px;font-size:11px;letter-spacing:0.70px">結束</i></div>
<div class="t" style="left:17.00px;top:154.68px;font-size:11.50px;"><i style="display:inline-block;width:35.10px;font-size:11px;letter-spacing:0.70px">主流程</i><span style="letter-spacing:0.93px;margin-left:0.46px;margin-right:-0.46px">:MB:</span><i style="display:inline-block;width:23.40px;font-size:11px;letter-spacing:0.70px">包裝</i><span style="letter-spacing:0.71px;margin-left:0.36px;margin-right:-0.36px">,</span><i style="display:inline-block;width:46.80px;font-size:11px;letter-spacing:0.70px">包裝稱重</i></div>
<div class="t" style="left:169.30px;top:154.68px;font-size:11.50px;"><i style="display:inline-block;width:58.50px;font-size:11px;letter-spacing:0.70px">主流程版本</i><span style="letter-spacing:1.56px;margin-left:0.78px;margin-right:-0.78px">:1</span></div>
<div class="t" style="left:256.00px;top:154.68px;font-size:11.50px;"><i style="display:inline-block;width:35.10px;font-size:11px;letter-spacing:0.70px">主站別</i><span style="letter-spacing:0.13px;margin-left:0.07px;margin-right:-0.07px">:PCBA</span><i style="display:inline-block;width:46.80px;font-size:11px;letter-spacing:0.70px">包裝稱重</i></div>
<div class="t" style="left:391.40px;top:154.68px;font-size:11.50px;"><i style="display:inline-block;width:70.20px;font-size:11px;letter-spacing:0.70px">主流程下一站</i><span style="letter-spacing:1.69px;margin-left:0.84px;margin-right:-0.84px">:</span><i style="display:inline-block;width:23.40px;font-size:11px;letter-spacing:0.70px">結束</i></div>
<div class="t" style="left:17.00px;top:170.01px;font-size:11.50px;"><i style="display:inline-block;width:117.00px;font-size:11px;letter-spacing:0.70px">條碼最后一次報錯信息</i><span style="letter-spacing:1.69px;margin-left:0.84px;margin-right:-0.84px">:</span></div>
<div class="t" style="left:17.00px;top:185.34px;font-size:11.50px;"><i style="display:inline-block;width:561.60px;font-size:11px;letter-spacing:0.70px">備註說明：當條碼的當前流程與主流程不一樣時先走當前流程，當前流程結束時才可按主流程走向它的下一站</i></div>
<svg class="ic" style="left:17px;top:207px" width="13" height="13" viewBox="0 0 13 13"><rect x="0.5" y="0.5" width="12" height="12" rx="2.6" fill="#f1f5f8" stroke="#8a9096"/><path d="M3.3 6.4 L6.5 3.6 L9.7 6.4 M3.3 10 L6.5 7.2 L9.7 10" fill="none" stroke="#434a52" stroke-width="1.15"/></svg>
<div class="t h" style="left:36.00px;top:208.75px;font-size:13.42px;font-weight:bold;color:#1b2874;-webkit-text-stroke:0.15px currentColor;"><i style="display:inline-block;width:54.60px;font-size:12px;letter-spacing:1.65px">工單資料</i><span style="letter-spacing:1.98px;margin-left:0.99px;margin-right:-0.99px">(</span><i style="display:inline-block;width:109.20px;font-size:12px;letter-spacing:1.65px">綠字體為當前工單</i><span style="letter-spacing:1.98px;margin-left:0.99px;margin-right:-0.99px">)</span></div>
<div style="position:absolute;left:17px;top:225.5px;width:1900px;height:47.5px;background:#d6dcf4;border-bottom:2px solid #9a9ca6"></div>
<div class="t" style="left:19.00px;top:227.51px;font-size:11.50px;"><i style="display:inline-block;width:46.80px;font-size:11px;letter-spacing:0.70px">工單號碼</i><span style="letter-spacing:1.20px;margin-left:0.60px;margin-right:-0.60px">&nbsp;:11D001818B</span></div>
<div class="t" style="left:195.00px;top:227.51px;font-size:11.50px;"><i style="display:inline-block;width:23.40px;font-size:11px;letter-spacing:0.70px">料號</i><span style="letter-spacing:1.34px;margin-left:0.67px;margin-right:-0.67px">&nbsp;:601-7680-060</span></div>
<div class="t" style="left:826.80px;top:227.51px;font-size:11.50px;"><span style="letter-spacing:0.87px;margin-left:0.44px;margin-right:-0.44px">ECN:003</span></div>
<div class="t" style="left:904.60px;top:227.51px;font-size:11.50px;"><i style="display:inline-block;width:23.40px;font-size:11px;letter-spacing:0.70px">機種</i><span style="letter-spacing:1.35px;margin-left:0.67px;margin-right:-0.67px">&nbsp;:7680</span></div>
<div class="t" style="left:1042.50px;top:227.51px;font-size:11.50px;"><i style="display:inline-block;width:23.40px;font-size:11px;letter-spacing:0.70px">狀態</i><span style="letter-spacing:0.78px;margin-left:0.39px;margin-right:-0.39px">&nbsp;:Active</span></div>
<div class="t" style="left:19.00px;top:242.81px;font-size:11.50px;"><i style="display:inline-block;width:46.80px;font-size:11px;letter-spacing:0.70px">生產單位</i><span style="letter-spacing:0.22px;margin-left:0.11px;margin-right:-0.11px">&nbsp;:PCBA&nbsp;SMT</span></div>
<div class="t" style="left:195.00px;top:242.81px;font-size:11.50px;"><i style="display:inline-block;width:23.40px;font-size:11px;letter-spacing:0.70px">組織</i><span style="letter-spacing:0.64px;margin-left:0.32px;margin-right:-0.32px">&nbsp;:BAN</span></div>
<div class="t" style="left:826.80px;top:242.81px;font-size:11.50px;"><i style="display:inline-block;width:23.40px;font-size:11px;letter-spacing:0.70px">線別</i><span style="letter-spacing:0.82px;margin-left:0.41px;margin-right:-0.41px">&nbsp;:A2E</span></div>
<div class="t" style="left:904.60px;top:242.81px;font-size:11.50px;"><i style="display:inline-block;width:23.40px;font-size:11px;letter-spacing:0.70px">產品</i><span style="letter-spacing:0.68px;margin-left:0.34px;margin-right:-0.34px">&nbsp;:MB</span></div>
<div class="t" style="left:1042.50px;top:242.81px;font-size:11.50px;"><i style="display:inline-block;width:23.40px;font-size:11px;letter-spacing:0.70px">類型</i><span style="letter-spacing:0.44px;margin-left:0.22px;margin-right:-0.22px">&nbsp;:MassProd</span></div>
<div class="t" style="left:19.00px;top:258.11px;font-size:11.50px;"><i style="display:inline-block;width:46.80px;font-size:11px;letter-spacing:0.70px">訂單信息</i><span style="letter-spacing:1.38px;margin-left:0.69px;margin-right:-0.69px">&nbsp;:60047315</span></div>
<div class="t" style="left:195.00px;top:258.11px;font-size:11.50px;"><i style="display:inline-block;width:46.80px;font-size:11px;letter-spacing:0.70px">流程名稱</i><span style="letter-spacing:1.20px;margin-left:0.60px;margin-right:-0.60px">&nbsp;:</span><i style="display:inline-block;width:23.40px;font-size:11px;letter-spacing:0.70px">單面</i><span style="letter-spacing:1.06px;margin-left:0.53px;margin-right:-0.53px">(</span><i style="display:inline-block;width:11.70px;font-size:11px;letter-spacing:0.70px">有</i><span style="letter-spacing:0.50px;margin-left:0.25px;margin-right:-0.25px">DIP&nbsp;ICT):SMT</span><i style="display:inline-block;width:46.80px;font-size:11px;letter-spacing:0.70px">正板投入</i><span style="letter-spacing:0.60px;margin-left:0.30px;margin-right:-0.30px">,AOI</span><i style="display:inline-block;width:23.40px;font-size:11px;letter-spacing:0.70px">正板</i><span style="letter-spacing:0.96px;margin-left:0.48px;margin-right:-0.48px">,HI</span><i style="display:inline-block;width:23.40px;font-size:11px;letter-spacing:0.70px">投入</i><span style="letter-spacing:0.71px;margin-left:0.36px;margin-right:-0.36px">,</span><i style="display:inline-block;width:23.40px;font-size:11px;letter-spacing:0.70px">修補</i><span style="letter-spacing:0.71px;margin-left:0.36px;margin-right:-0.36px">,</span><i style="display:inline-block;width:46.80px;font-size:11px;letter-spacing:0.70px">錫面目檢</i><span style="letter-spacing:0.48px;margin-left:0.24px;margin-right:-0.24px">,DIP&nbsp;ICT(ATE),</span><i style="display:inline-block;width:46.80px;font-size:11px;letter-spacing:0.70px">電壓測試</i><span style="letter-spacing:0.66px;margin-left:0.33px;margin-right:-0.33px">(F),</span><i style="display:inline-block;width:46.80px;font-size:11px;letter-spacing:0.70px">功能測試</i><span style="letter-spacing:0.52px;margin-left:0.26px;margin-right:-0.26px">,PK-VI.</span></div>
<div class="t" style="left:826.80px;top:258.11px;font-size:11.50px;"><i style="display:inline-block;width:46.80px;font-size:11px;letter-spacing:0.70px">流程版本</i><span style="letter-spacing:1.31px;margin-left:0.66px;margin-right:-0.66px">&nbsp;:12</span></div>
<div class="t" style="left:904.60px;top:258.11px;font-size:11.50px;"><i style="display:inline-block;width:46.80px;font-size:11px;letter-spacing:0.70px">建置時間</i><span style="letter-spacing:1.36px;margin-left:0.68px;margin-right:-0.68px">&nbsp;:2011-03-12&nbsp;02:07:08</span></div>
<div style="position:absolute;left:17px;top:321.5px;width:1900px;height:0;border-bottom:2px solid #b4b6bc"></div>
<div class="t" style="left:19.00px;top:275.61px;font-size:11.50px;color:#2e8b2e;"><i style="display:inline-block;width:46.80px;font-size:11px;letter-spacing:0.70px">工單號碼</i><span style="letter-spacing:1.09px;margin-left:0.55px;margin-right:-0.55px">&nbsp;:11PM019849</span></div>
<div class="t" style="left:195.00px;top:275.61px;font-size:11.50px;color:#2e8b2e;"><i style="display:inline-block;width:23.40px;font-size:11px;letter-spacing:0.70px">料號</i><span style="letter-spacing:1.34px;margin-left:0.67px;margin-right:-0.67px">&nbsp;:911-7680-033</span></div>
<div class="t" style="left:370.80px;top:275.61px;font-size:11.50px;color:#2e8b2e;"><span style="letter-spacing:0.87px;margin-left:0.44px;margin-right:-0.44px">ECN:000</span></div>
<div class="t" style="left:448.40px;top:275.61px;font-size:11.50px;color:#2e8b2e;"><i style="display:inline-block;width:23.40px;font-size:11px;letter-spacing:0.70px">機種</i><span style="letter-spacing:1.35px;margin-left:0.67px;margin-right:-0.67px">&nbsp;:7680</span></div>
<div class="t" style="left:585.70px;top:275.61px;font-size:11.50px;color:#2e8b2e;"><i style="display:inline-block;width:23.40px;font-size:11px;letter-spacing:0.70px">狀態</i><span style="letter-spacing:0.79px;margin-left:0.39px;margin-right:-0.39px">&nbsp;:On&nbsp;Line</span></div>
<div class="t" style="left:19.00px;top:290.91px;font-size:11.50px;color:#2e8b2e;"><i style="display:inline-block;width:46.80px;font-size:11px;letter-spacing:0.70px">生產單位</i><span style="letter-spacing:0.12px;margin-left:0.06px;margin-right:-0.06px">&nbsp;:PKG&nbsp;PCBA</span></div>
<div class="t" style="left:195.00px;top:290.91px;font-size:11.50px;color:#2e8b2e;"><i style="display:inline-block;width:23.40px;font-size:11px;letter-spacing:0.70px">組織</i><span style="letter-spacing:0.64px;margin-left:0.32px;margin-right:-0.32px">&nbsp;:BAN</span></div>
<div class="t" style="left:370.80px;top:290.91px;font-size:11.50px;color:#2e8b2e;"><i style="display:inline-block;width:23.40px;font-size:11px;letter-spacing:0.70px">線別</i><span style="letter-spacing:0.82px;margin-left:0.41px;margin-right:-0.41px">&nbsp;:A2E</span></div>
<div class="t" style="left:448.40px;top:290.91px;font-size:11.50px;color:#2e8b2e;"><i style="display:inline-block;width:23.40px;font-size:11px;letter-spacing:0.70px">產品</i><span style="letter-spacing:0.68px;margin-left:0.34px;margin-right:-0.34px">&nbsp;:MB</span></div>
<div class="t" style="left:585.70px;top:290.91px;font-size:11.50px;color:#2e8b2e;"><i style="display:inline-block;width:23.40px;font-size:11px;letter-spacing:0.70px">類型</i><span style="letter-spacing:0.44px;margin-left:0.22px;margin-right:-0.22px">&nbsp;:MassProd</span></div>
<div class="t" style="left:19.00px;top:306.21px;font-size:11.50px;color:#2e8b2e;"><i style="display:inline-block;width:46.80px;font-size:11px;letter-spacing:0.70px">訂單信息</i><span style="letter-spacing:1.38px;margin-left:0.69px;margin-right:-0.69px">&nbsp;:10632051</span></div>
<div class="t" style="left:195.00px;top:306.21px;font-size:11.50px;color:#2e8b2e;"><i style="display:inline-block;width:46.80px;font-size:11px;letter-spacing:0.70px">流程名稱</i><span style="letter-spacing:0.89px;margin-left:0.44px;margin-right:-0.44px">&nbsp;:MB:</span><i style="display:inline-block;width:23.40px;font-size:11px;letter-spacing:0.70px">包裝</i><span style="letter-spacing:0.71px;margin-left:0.36px;margin-right:-0.36px">,</span><i style="display:inline-block;width:46.80px;font-size:11px;letter-spacing:0.70px">包裝稱重</i></div>
<div class="t" style="left:370.80px;top:306.21px;font-size:11.50px;color:#2e8b2e;"><i style="display:inline-block;width:46.80px;font-size:11px;letter-spacing:0.70px">流程版本</i><span style="letter-spacing:1.27px;margin-left:0.64px;margin-right:-0.64px">&nbsp;:1</span></div>
<div class="t" style="left:448.40px;top:306.21px;font-size:11.50px;color:#2e8b2e;"><i style="display:inline-block;width:46.80px;font-size:11px;letter-spacing:0.70px">建置時間</i><span style="letter-spacing:1.36px;margin-left:0.68px;margin-right:-0.68px">&nbsp;:2011-03-10&nbsp;08:19:59</span></div>
<svg class="ic" style="left:17px;top:329.5px" width="13" height="13" viewBox="0 0 13 13"><rect x="0.5" y="0.5" width="12" height="12" rx="2.6" fill="#f1f5f8" stroke="#8a9096"/><path d="M3.3 3.6 L6.5 6.4 L9.7 3.6 M3.3 7.2 L6.5 10 L9.7 7.2" fill="none" stroke="#434a52" stroke-width="1.15"/></svg>
<div class="t h" style="left:36.00px;top:331.75px;font-size:13.42px;font-weight:bold;color:#1b2874;-webkit-text-stroke:0.15px currentColor;"><i style="display:inline-block;width:54.60px;font-size:12px;letter-spacing:1.65px">組件資料</i></div>
<svg class="ic" style="left:17px;top:354px" width="13" height="13" viewBox="0 0 13 13"><rect x="0.5" y="0.5" width="12" height="12" rx="2.6" fill="#f1f5f8" stroke="#8a9096"/><path d="M3.3 6.4 L6.5 3.6 L9.7 6.4 M3.3 10 L6.5 7.2 L9.7 10" fill="none" stroke="#434a52" stroke-width="1.15"/></svg>
<div class="t h" style="left:36.00px;top:356.75px;font-size:13.42px;font-weight:bold;color:#1b2874;-webkit-text-stroke:0.15px currentColor;"><i style="display:inline-block;width:54.60px;font-size:12px;letter-spacing:1.65px">過站記錄</i></div>
<div class="th" style="left:18.0px;top:374.1px;width:1446.7px;height:23.5px"></div>
<div class="r1" style="left:18.0px;top:397.6px;width:1446.7px;height:24.0px"></div>
<div class="r2" style="left:18.0px;top:421.6px;width:1446.7px;height:24.0px"></div>
<div class="r1" style="left:18.0px;top:445.6px;width:1446.7px;height:24.0px"></div>
<div class="r2" style="left:18.0px;top:469.6px;width:1446.7px;height:24.0px"></div>
<div class="r1" style="left:18.0px;top:493.6px;width:1446.7px;height:24.0px"></div>
<div class="r2" style="left:18.0px;top:517.6px;width:1446.7px;height:24.0px"></div>
<div class="r1" style="left:18.0px;top:541.6px;width:1446.7px;height:24.0px"></div>
<div class="r2" style="left:18.0px;top:565.6px;width:1446.7px;height:24.0px"></div>
<div class="r1" style="left:18.0px;top:589.6px;width:1446.7px;height:24.0px"></div>
<div class="r2" style="left:18.0px;top:613.6px;width:1446.7px;height:24.0px"></div>
<div class="hl" style="left:18.0px;top:396.6px;width:1446.7px"></div>
<div class="hl" style="left:18.0px;top:420.6px;width:1446.7px"></div>
<div class="hl" style="left:18.0px;top:444.6px;width:1446.7px"></div>
<div class="hl" style="left:18.0px;top:468.6px;width:1446.7px"></div>
<div class="hl" style="left:18.0px;top:492.6px;width:1446.7px"></div>
<div class="hl" style="left:18.0px;top:516.6px;width:1446.7px"></div>
<div class="hl" style="left:18.0px;top:540.6px;width:1446.7px"></div>
<div class="hl" style="left:18.0px;top:564.6px;width:1446.7px"></div>
<div class="hl" style="left:18.0px;top:588.6px;width:1446.7px"></div>
<div class="hl" style="left:18.0px;top:612.6px;width:1446.7px"></div>
<div class="hl" style="left:18.0px;top:636.6px;width:1446.7px"></div>
<div class="vlh" style="left:197.5px;top:374.1px;height:23.5px"></div>
<div class="vl" style="left:197.5px;top:397.6px;height:240.0px"></div>
<div class="vlh" style="left:241.0px;top:374.1px;height:23.5px"></div>
<div class="vl" style="left:241.0px;top:397.6px;height:240.0px"></div>
<div class="vlh" style="left:285.2px;top:374.1px;height:23.5px"></div>
<div class="vl" style="left:285.2px;top:397.6px;height:240.0px"></div>
<div class="vlh" style="left:407.1px;top:374.1px;height:23.5px"></div>
<div class="vl" style="left:407.1px;top:397.6px;height:240.0px"></div>
<div class="vlh" style="left:471.0px;top:374.1px;height:23.5px"></div>
<div class="vl" style="left:471.0px;top:397.6px;height:240.0px"></div>
<div class="vlh" style="left:534.1px;top:374.1px;height:23.5px"></div>
<div class="vl" style="left:534.1px;top:397.6px;height:240.0px"></div>
<div class="vlh" style="left:597.6px;top:374.1px;height:23.5px"></div>
<div class="vl" style="left:597.6px;top:397.6px;height:240.0px"></div>
<div class="vlh" style="left:720.1px;top:374.1px;height:23.5px"></div>
<div class="vl" style="left:720.1px;top:397.6px;height:240.0px"></div>
<div class="vlh" style="left:901.0px;top:374.1px;height:23.5px"></div>
<div class="vl" style="left:901.0px;top:397.6px;height:240.0px"></div>
<div class="vlh" style="left:1081.7px;top:374.1px;height:23.5px"></div>
<div class="vl" style="left:1081.7px;top:397.6px;height:240.0px"></div>
<div class="vlh" style="left:1282.2px;top:374.1px;height:23.5px"></div>
<div class="vl" style="left:1282.2px;top:397.6px;height:240.0px"></div>
<div class="vl" style="left:1463.7px;top:374.1px;height:263.5px"></div>
<div class="t" style="left:96.55px;top:377.91px;font-size:11.50px;font-weight:bold;color:#ffffff;"><i style="display:inline-block;width:23.40px;font-size:12px;letter-spacing:-0.30px">流程</i></div>
<div class="t" style="left:208.55px;top:377.91px;font-size:11.50px;font-weight:bold;color:#ffffff;"><i style="display:inline-block;width:23.40px;font-size:12px;letter-spacing:-0.30px">版本</i></div>
<div class="t" style="left:252.40px;top:377.91px;font-size:11.50px;font-weight:bold;color:#ffffff;"><i style="display:inline-block;width:23.40px;font-size:12px;letter-spacing:-0.30px">線別</i></div>
<div class="t" style="left:335.45px;top:377.91px;font-size:11.50px;font-weight:bold;color:#ffffff;"><i style="display:inline-block;width:23.40px;font-size:12px;letter-spacing:-0.30px">站別</i></div>
<div class="t" style="left:416.65px;top:377.91px;font-size:11.50px;font-weight:bold;color:#ffffff;"><i style="display:inline-block;width:46.80px;font-size:12px;letter-spacing:-0.30px">過站狀態</i></div>
<div class="t" style="left:480.15px;top:377.91px;font-size:11.50px;font-weight:bold;color:#ffffff;"><i style="display:inline-block;width:46.80px;font-size:12px;letter-spacing:-0.30px">過站次數</i></div>
<div class="t" style="left:543.45px;top:377.91px;font-size:11.50px;font-weight:bold;color:#ffffff;"><i style="display:inline-block;width:46.80px;font-size:12px;letter-spacing:-0.30px">系統類型</i></div>
<div class="t" style="left:642.30px;top:377.91px;font-size:11.50px;font-weight:bold;color:#ffffff;"><i style="display:inline-block;width:35.10px;font-size:12px;letter-spacing:-0.30px">操作员</i></div>
<div class="t" style="left:788.15px;top:377.91px;font-size:11.50px;font-weight:bold;color:#ffffff;"><i style="display:inline-block;width:46.80px;font-size:12px;letter-spacing:-0.30px">過站時間</i></div>
<div class="t" style="left:968.95px;top:377.91px;font-size:11.50px;font-weight:bold;color:#ffffff;"><i style="display:inline-block;width:46.80px;font-size:12px;letter-spacing:-0.30px">錄入時間</i></div>
<div class="t" style="left:1136.63px;top:377.91px;font-size:11.50px;font-weight:bold;color:#ffffff;"><i style="display:inline-block;width:46.80px;font-size:12px;letter-spacing:-0.30px">過站耗時</i><span style="letter-spacing:2.16px;margin-left:1.08px;margin-right:-1.08px">||</span><i style="display:inline-block;width:35.10px;font-size:12px;letter-spacing:-0.30px">總耗時</i></div>
<div class="t" style="left:1327.15px;top:377.91px;font-size:11.50px;font-weight:bold;color:#ffffff;"><i style="display:inline-block;width:93.60px;font-size:12px;letter-spacing:-0.30px">組裝箱號拆轉原因</i></div>
<div class="t" style="left:20.00px;top:403.01px;font-size:11.50px;"><span style="letter-spacing:0.69px;margin-left:0.34px;margin-right:-0.34px">MBMET_001</span></div>
<div class="t" style="left:200.50px;top:403.01px;font-size:11.50px;"><span style="letter-spacing:1.42px;margin-left:0.71px;margin-right:-0.71px">12</span></div>
<div class="t" style="left:244.00px;top:403.01px;font-size:11.50px;"><span style="letter-spacing:0.57px;margin-left:0.29px;margin-right:-0.29px">A2E</span></div>
<div class="t" style="left:288.20px;top:403.01px;font-size:11.50px;color:#1f2f6e;text-decoration:underline;"><span style="letter-spacing:0.05px;margin-left:0.03px;margin-right:-0.03px">SMT</span><i style="text-decoration:underline;display:inline-block;width:23.40px;font-size:11px;letter-spacing:0.70px">投入</i></div>
<div class="t" style="left:436.63px;top:403.01px;font-size:11.50px;"><span style="letter-spacing:-0.83px;margin-left:-0.42px;margin-right:0.42px">P</span></div>
<div class="t" style="left:499.64px;top:403.01px;font-size:11.50px;"><span style="letter-spacing:1.42px;margin-left:0.71px;margin-right:-0.71px">1</span></div>
<div class="t" style="left:543.43px;top:403.01px;font-size:11.50px;"><span style="letter-spacing:1.42px;margin-left:0.71px;margin-right:-0.71px">485</span><i style="display:inline-block;width:23.40px;font-size:11px;letter-spacing:0.70px">掃描</i></div>
<div class="t" style="left:610.02px;top:403.01px;font-size:11.50px;"><span style="letter-spacing:0.27px;margin-left:0.14px;margin-right:-0.14px">MES-AP(MES-AP)</span></div>
<div class="t" style="left:723.10px;top:403.01px;font-size:11.50px;"><span style="letter-spacing:1.37px;margin-left:0.69px;margin-right:-0.69px">2011-03-12&nbsp;03:37:29</span></div>
<div class="t" style="left:904.00px;top:403.01px;font-size:11.50px;"><span style="letter-spacing:1.37px;margin-left:0.69px;margin-right:-0.69px">2011-03-12&nbsp;03:37:29</span></div>
<div class="t" style="left:1084.70px;top:403.01px;font-size:11.50px;"><span style="letter-spacing:-0.39px;margin-left:-0.19px;margin-right:0.19px">TOP</span></div>
<div class="t" style="left:20.00px;top:427.01px;font-size:11.50px;"><span style="letter-spacing:0.69px;margin-left:0.34px;margin-right:-0.34px">MBMET_001</span></div>
<div class="t" style="left:200.50px;top:427.01px;font-size:11.50px;"><span style="letter-spacing:1.42px;margin-left:0.71px;margin-right:-0.71px">12</span></div>
<div class="t" style="left:244.00px;top:427.01px;font-size:11.50px;"><span style="letter-spacing:0.57px;margin-left:0.29px;margin-right:-0.29px">A2E</span></div>
<div class="t" style="left:288.20px;top:427.01px;font-size:11.50px;color:#1f2f6e;text-decoration:underline;"><span style="letter-spacing:0.56px;margin-left:0.28px;margin-right:-0.28px">AOI</span><i style="text-decoration:underline;display:inline-block;width:23.40px;font-size:11px;letter-spacing:0.70px">正板</i></div>
<div class="t" style="left:436.63px;top:427.01px;font-size:11.50px;"><span style="letter-spacing:-0.83px;margin-left:-0.42px;margin-right:0.42px">P</span></div>
<div class="t" style="left:499.64px;top:427.01px;font-size:11.50px;"><span style="letter-spacing:1.42px;margin-left:0.71px;margin-right:-0.71px">1</span></div>
<div class="t" style="left:543.45px;top:425.51px;font-size:11.50px;"><i style="display:inline-block;width:46.80px;font-size:11px;letter-spacing:0.70px">文件上傳</i></div>
<div class="t" style="left:620.77px;top:427.01px;font-size:11.50px;"><span style="letter-spacing:0.48px;margin-left:0.24px;margin-right:-0.24px">SysTem(SYS)</span></div>
<div class="t" style="left:723.10px;top:427.01px;font-size:11.50px;"><span style="letter-spacing:1.37px;margin-left:0.69px;margin-right:-0.69px">2011-03-12&nbsp;04:01:40</span></div>
<div class="t" style="left:904.00px;top:427.01px;font-size:11.50px;"><span style="letter-spacing:1.37px;margin-left:0.69px;margin-right:-0.69px">2011-03-12&nbsp;04:01:40</span></div>
<div class="t" style="left:1084.70px;top:427.01px;font-size:11.50px;"><span style="letter-spacing:1.53px;margin-left:0.77px;margin-right:-0.77px">00:24:11||00:24:11</span></div>
<div class="t" style="left:20.00px;top:451.01px;font-size:11.50px;"><span style="letter-spacing:0.69px;margin-left:0.34px;margin-right:-0.34px">MBMET_001</span></div>
<div class="t" style="left:200.50px;top:451.01px;font-size:11.50px;"><span style="letter-spacing:1.42px;margin-left:0.71px;margin-right:-0.71px">12</span></div>
<div class="t" style="left:244.00px;top:451.01px;font-size:11.50px;"><span style="letter-spacing:0.57px;margin-left:0.29px;margin-right:-0.29px">A2E</span></div>
<div class="t" style="left:288.20px;top:451.01px;font-size:11.50px;color:#1f2f6e;text-decoration:underline;"><span style="letter-spacing:0.51px;margin-left:0.26px;margin-right:-0.26px">DIP&nbsp;</span><i style="text-decoration:underline;display:inline-block;width:23.40px;font-size:11px;letter-spacing:0.70px">投入</i></div>
<div class="t" style="left:436.63px;top:451.01px;font-size:11.50px;"><span style="letter-spacing:-0.83px;margin-left:-0.42px;margin-right:0.42px">P</span></div>
<div class="t" style="left:499.64px;top:451.01px;font-size:11.50px;"><span style="letter-spacing:1.42px;margin-left:0.71px;margin-right:-0.71px">1</span></div>
<div class="t" style="left:543.43px;top:451.01px;font-size:11.50px;"><span style="letter-spacing:1.42px;margin-left:0.71px;margin-right:-0.71px">485</span><i style="display:inline-block;width:23.40px;font-size:11px;letter-spacing:0.70px">掃描</i></div>
<div class="t" style="left:606.15px;top:451.01px;font-size:11.50px;"><i style="display:inline-block;width:35.10px;font-size:11px;letter-spacing:0.70px">謝先友</i><span style="letter-spacing:1.35px;margin-left:0.67px;margin-right:-0.67px">(00059252)</span></div>
<div class="t" style="left:723.10px;top:451.01px;font-size:11.50px;"><span style="letter-spacing:1.37px;margin-left:0.69px;margin-right:-0.69px">2011-03-12&nbsp;04:12:27</span></div>
<div class="t" style="left:904.00px;top:451.01px;font-size:11.50px;"><span style="letter-spacing:1.37px;margin-left:0.69px;margin-right:-0.69px">2011-03-12&nbsp;04:12:25</span></div>
<div class="t" style="left:1084.70px;top:451.01px;font-size:11.50px;"><span style="letter-spacing:1.53px;margin-left:0.77px;margin-right:-0.77px">00:10:45||00:34:56</span></div>
<div class="t" style="left:20.00px;top:475.01px;font-size:11.50px;"><span style="letter-spacing:0.69px;margin-left:0.34px;margin-right:-0.34px">MBMET_001</span></div>
<div class="t" style="left:200.50px;top:475.01px;font-size:11.50px;"><span style="letter-spacing:1.42px;margin-left:0.71px;margin-right:-0.71px">12</span></div>
<div class="t" style="left:244.00px;top:475.01px;font-size:11.50px;"><span style="letter-spacing:0.57px;margin-left:0.29px;margin-right:-0.29px">A2E</span></div>
<div class="t" style="left:288.20px;top:473.51px;font-size:11.50px;color:#1f2f6e;text-decoration:underline;"><i style="text-decoration:underline;display:inline-block;width:23.40px;font-size:11px;letter-spacing:0.70px">修補</i></div>
<div class="t" style="left:436.63px;top:475.01px;font-size:11.50px;"><span style="letter-spacing:-0.83px;margin-left:-0.42px;margin-right:0.42px">P</span></div>
<div class="t" style="left:499.64px;top:475.01px;font-size:11.50px;"><span style="letter-spacing:1.42px;margin-left:0.71px;margin-right:-0.71px">1</span></div>
<div class="t" style="left:543.43px;top:475.01px;font-size:11.50px;"><span style="letter-spacing:1.42px;margin-left:0.71px;margin-right:-0.71px">485</span><i style="display:inline-block;width:23.40px;font-size:11px;letter-spacing:0.70px">掃描</i></div>
<div class="t" style="left:606.15px;top:475.01px;font-size:11.50px;"><i style="display:inline-block;width:35.10px;font-size:11px;letter-spacing:0.70px">鄭亞濤</i><span style="letter-spacing:1.35px;margin-left:0.67px;margin-right:-0.67px">(00073568)</span></div>
<div class="t" style="left:723.10px;top:475.01px;font-size:11.50px;"><span style="letter-spacing:1.37px;margin-left:0.69px;margin-right:-0.69px">2011-03-12&nbsp;04:49:02</span></div>
<div class="t" style="left:904.00px;top:475.01px;font-size:11.50px;"><span style="letter-spacing:1.37px;margin-left:0.69px;margin-right:-0.69px">2011-03-12&nbsp;04:48:53</span></div>
<div class="t" style="left:1084.70px;top:475.01px;font-size:11.50px;"><span style="letter-spacing:1.53px;margin-left:0.77px;margin-right:-0.77px">00:36:28||01:11:24</span></div>
<div class="t" style="left:20.00px;top:499.01px;font-size:11.50px;"><span style="letter-spacing:0.69px;margin-left:0.34px;margin-right:-0.34px">MBMET_001</span></div>
<div class="t" style="left:200.50px;top:499.01px;font-size:11.50px;"><span style="letter-spacing:1.42px;margin-left:0.71px;margin-right:-0.71px">12</span></div>
<div class="t" style="left:244.00px;top:499.01px;font-size:11.50px;"><span style="letter-spacing:0.57px;margin-left:0.29px;margin-right:-0.29px">A2E</span></div>
<div class="t" style="left:288.20px;top:499.01px;font-size:11.50px;color:#1f2f6e;text-decoration:underline;"><span style="letter-spacing:0.44px;margin-left:0.22px;margin-right:-0.22px">DIP&nbsp;ICT</span></div>
<div class="t" style="left:436.63px;top:499.01px;font-size:11.50px;"><span style="letter-spacing:-0.83px;margin-left:-0.42px;margin-right:0.42px">P</span></div>
<div class="t" style="left:499.64px;top:499.01px;font-size:11.50px;"><span style="letter-spacing:1.42px;margin-left:0.71px;margin-right:-0.71px">1</span></div>
<div class="t" style="left:543.45px;top:497.51px;font-size:11.50px;"><i style="display:inline-block;width:46.80px;font-size:11px;letter-spacing:0.70px">文件上傳</i></div>
<div class="t" style="left:612.00px;top:499.01px;font-size:11.50px;"><i style="display:inline-block;width:23.40px;font-size:11px;letter-spacing:0.70px">王博</i><span style="letter-spacing:1.35px;margin-left:0.67px;margin-right:-0.67px">(00061078)</span></div>
<div class="t" style="left:723.10px;top:499.01px;font-size:11.50px;"><span style="letter-spacing:1.37px;margin-left:0.69px;margin-right:-0.69px">2011-03-12&nbsp;04:52:58</span></div>
<div class="t" style="left:904.00px;top:499.01px;font-size:11.50px;"><span style="letter-spacing:1.37px;margin-left:0.69px;margin-right:-0.69px">2011-03-12&nbsp;04:52:16</span></div>
<div class="t" style="left:1084.70px;top:499.01px;font-size:11.50px;"><span style="letter-spacing:1.53px;margin-left:0.77px;margin-right:-0.77px">00:03:23||01:14:47</span></div>
<div class="t" style="left:20.00px;top:523.01px;font-size:11.50px;"><span style="letter-spacing:0.69px;margin-left:0.34px;margin-right:-0.34px">MBMET_001</span></div>
<div class="t" style="left:200.50px;top:523.01px;font-size:11.50px;"><span style="letter-spacing:1.42px;margin-left:0.71px;margin-right:-0.71px">12</span></div>
<div class="t" style="left:244.00px;top:523.01px;font-size:11.50px;"><span style="letter-spacing:0.57px;margin-left:0.29px;margin-right:-0.29px">A2E</span></div>
<div class="t" style="left:288.20px;top:521.51px;font-size:11.50px;color:#1f2f6e;text-decoration:underline;"><i style="text-decoration:underline;display:inline-block;width:46.80px;font-size:11px;letter-spacing:0.70px">電壓測試</i></div>
<div class="t" style="left:436.63px;top:523.01px;font-size:11.50px;"><span style="letter-spacing:-0.83px;margin-left:-0.42px;margin-right:0.42px">P</span></div>
<div class="t" style="left:499.64px;top:523.01px;font-size:11.50px;"><span style="letter-spacing:1.42px;margin-left:0.71px;margin-right:-0.71px">1</span></div>
<div class="t" style="left:543.45px;top:521.51px;font-size:11.50px;"><i style="display:inline-block;width:46.80px;font-size:11px;letter-spacing:0.70px">文件上傳</i></div>
<div class="t" style="left:606.15px;top:523.01px;font-size:11.50px;"><i style="display:inline-block;width:35.10px;font-size:11px;letter-spacing:0.70px">彭國豔</i><span style="letter-spacing:1.35px;margin-left:0.67px;margin-right:-0.67px">(00062452)</span></div>
<div class="t" style="left:723.10px;top:523.01px;font-size:11.50px;"><span style="letter-spacing:1.37px;margin-left:0.69px;margin-right:-0.69px">2011-03-12&nbsp;04:54:23</span></div>
<div class="t" style="left:904.00px;top:523.01px;font-size:11.50px;"><span style="letter-spacing:1.37px;margin-left:0.69px;margin-right:-0.69px">2011-03-12&nbsp;04:54:23</span></div>
<div class="t" style="left:1084.70px;top:523.01px;font-size:11.50px;"><span style="letter-spacing:1.53px;margin-left:0.77px;margin-right:-0.77px">00:02:07||01:16:54</span></div>
<div class="t" style="left:20.00px;top:547.01px;font-size:11.50px;"><span style="letter-spacing:0.69px;margin-left:0.34px;margin-right:-0.34px">MBMET_001</span></div>
<div class="t" style="left:200.50px;top:547.01px;font-size:11.50px;"><span style="letter-spacing:1.42px;margin-left:0.71px;margin-right:-0.71px">12</span></div>
<div class="t" style="left:244.00px;top:547.01px;font-size:11.50px;"><span style="letter-spacing:0.57px;margin-left:0.29px;margin-right:-0.29px">A2E</span></div>
<div class="t" style="left:288.20px;top:545.51px;font-size:11.50px;color:#1f2f6e;text-decoration:underline;"><i style="text-decoration:underline;display:inline-block;width:23.40px;font-size:11px;letter-spacing:0.70px">功能</i></div>
<div class="t" style="left:436.63px;top:547.01px;font-size:11.50px;"><span style="letter-spacing:-0.83px;margin-left:-0.42px;margin-right:0.42px">P</span></div>
<div class="t" style="left:499.64px;top:547.01px;font-size:11.50px;"><span style="letter-spacing:1.42px;margin-left:0.71px;margin-right:-0.71px">1</span></div>
<div class="t" style="left:543.45px;top:545.51px;font-size:11.50px;"><i style="display:inline-block;width:46.80px;font-size:11px;letter-spacing:0.70px">文件上傳</i></div>
<div class="t" style="left:606.15px;top:547.01px;font-size:11.50px;"><i style="display:inline-block;width:35.10px;font-size:11px;letter-spacing:0.70px">王秀娟</i><span style="letter-spacing:1.35px;margin-left:0.67px;margin-right:-0.67px">(00040768)</span></div>
<div class="t" style="left:723.10px;top:547.01px;font-size:11.50px;"><span style="letter-spacing:1.37px;margin-left:0.69px;margin-right:-0.69px">2011-03-12&nbsp;05:10:26</span></div>
<div class="t" style="left:904.00px;top:547.01px;font-size:11.50px;"><span style="letter-spacing:1.37px;margin-left:0.69px;margin-right:-0.69px">2011-03-12&nbsp;05:10:27</span></div>
<div class="t" style="left:1084.70px;top:547.01px;font-size:11.50px;"><span style="letter-spacing:1.53px;margin-left:0.77px;margin-right:-0.77px">00:16:04||01:32:58</span></div>
<div class="t" style="left:20.00px;top:571.01px;font-size:11.50px;"><span style="letter-spacing:0.69px;margin-left:0.34px;margin-right:-0.34px">MBMET_001</span></div>
<div class="t" style="left:200.50px;top:571.01px;font-size:11.50px;"><span style="letter-spacing:1.42px;margin-left:0.71px;margin-right:-0.71px">12</span></div>
<div class="t" style="left:244.00px;top:571.01px;font-size:11.50px;"><span style="letter-spacing:0.57px;margin-left:0.29px;margin-right:-0.29px">A2E</span></div>
<div class="t" style="left:288.20px;top:571.01px;font-size:11.50px;color:#1f2f6e;text-decoration:underline;"><span style="letter-spacing:-0.06px;margin-left:-0.03px;margin-right:0.03px">PCBA&nbsp;</span><i style="text-decoration:underline;display:inline-block;width:46.80px;font-size:11px;letter-spacing:0.70px">包裝目檢</i></div>
<div class="t" style="left:436.63px;top:571.01px;font-size:11.50px;"><span style="letter-spacing:-0.83px;margin-left:-0.42px;margin-right:0.42px">P</span></div>
<div class="t" style="left:499.64px;top:571.01px;font-size:11.50px;"><span style="letter-spacing:1.42px;margin-left:0.71px;margin-right:-0.71px">1</span></div>
<div class="t" style="left:543.43px;top:571.01px;font-size:11.50px;"><span style="letter-spacing:1.42px;margin-left:0.71px;margin-right:-0.71px">485</span><i style="display:inline-block;width:23.40px;font-size:11px;letter-spacing:0.70px">掃描</i></div>
<div class="t" style="left:612.00px;top:571.01px;font-size:11.50px;"><i style="display:inline-block;width:23.40px;font-size:11px;letter-spacing:0.70px">楊靜</i><span style="letter-spacing:1.35px;margin-left:0.67px;margin-right:-0.67px">(00066594)</span></div>
<div class="t" style="left:723.10px;top:571.01px;font-size:11.50px;"><span style="letter-spacing:1.37px;margin-left:0.69px;margin-right:-0.69px">2011-03-12&nbsp;05:54:26</span></div>
<div class="t" style="left:904.00px;top:571.01px;font-size:11.50px;"><span style="letter-spacing:1.37px;margin-left:0.69px;margin-right:-0.69px">2011-03-12&nbsp;05:54:20</span></div>
<div class="t" style="left:1084.70px;top:571.01px;font-size:11.50px;"><span style="letter-spacing:1.53px;margin-left:0.77px;margin-right:-0.77px">00:43:53||02:16:51</span></div>
<div class="t" style="left:20.00px;top:595.01px;font-size:11.50px;"><span style="letter-spacing:0.22px;margin-left:0.11px;margin-right:-0.11px">PKGWEIGHT</span></div>
<div class="t" style="left:200.50px;top:595.01px;font-size:11.50px;"><span style="letter-spacing:1.42px;margin-left:0.71px;margin-right:-0.71px">1</span></div>
<div class="t" style="left:244.00px;top:595.01px;font-size:11.50px;"><span style="letter-spacing:0.57px;margin-left:0.29px;margin-right:-0.29px">A2E</span></div>
<div class="t" style="left:288.20px;top:595.01px;font-size:11.50px;color:#1f2f6e;text-decoration:underline;"><span style="letter-spacing:-0.06px;margin-left:-0.03px;margin-right:0.03px">PCBA&nbsp;</span><i style="text-decoration:underline;display:inline-block;width:23.40px;font-size:11px;letter-spacing:0.70px">包裝</i></div>
<div class="t" style="left:436.63px;top:595.01px;font-size:11.50px;"><span style="letter-spacing:-0.83px;margin-left:-0.42px;margin-right:0.42px">P</span></div>
<div class="t" style="left:499.64px;top:595.01px;font-size:11.50px;"><span style="letter-spacing:1.42px;margin-left:0.71px;margin-right:-0.71px">1</span></div>
<div class="t" style="left:543.43px;top:595.01px;font-size:11.50px;"><span style="letter-spacing:1.42px;margin-left:0.71px;margin-right:-0.71px">485</span><i style="display:inline-block;width:23.40px;font-size:11px;letter-spacing:0.70px">掃描</i></div>
<div class="t" style="left:606.15px;top:595.01px;font-size:11.50px;"><i style="display:inline-block;width:35.10px;font-size:11px;letter-spacing:0.70px">晏鏡霞</i><span style="letter-spacing:1.35px;margin-left:0.67px;margin-right:-0.67px">(00064530)</span></div>
<div class="t" style="left:723.10px;top:595.01px;font-size:11.50px;"><span style="letter-spacing:1.37px;margin-left:0.69px;margin-right:-0.69px">2011-03-12&nbsp;05:55:55</span></div>
<div class="t" style="left:904.00px;top:595.01px;font-size:11.50px;"><span style="letter-spacing:1.37px;margin-left:0.69px;margin-right:-0.69px">2011-03-12&nbsp;05:55:47</span></div>
<div class="t" style="left:1084.70px;top:595.01px;font-size:11.50px;"><span style="letter-spacing:1.53px;margin-left:0.77px;margin-right:-0.77px">00:01:27||02:18:18</span></div>
<div class="t" style="left:20.00px;top:619.01px;font-size:11.50px;"><span style="letter-spacing:0.22px;margin-left:0.11px;margin-right:-0.11px">PKGWEIGHT</span></div>
<div class="t" style="left:200.50px;top:619.01px;font-size:11.50px;"><span style="letter-spacing:1.42px;margin-left:0.71px;margin-right:-0.71px">1</span></div>
<div class="t" style="left:244.00px;top:619.01px;font-size:11.50px;"><span style="letter-spacing:0.57px;margin-left:0.29px;margin-right:-0.29px">A2E</span></div>
<div class="t" style="left:288.20px;top:619.01px;font-size:11.50px;color:#1f2f6e;text-decoration:underline;"><span style="letter-spacing:-0.26px;margin-left:-0.13px;margin-right:0.13px">PCBA</span><i style="text-decoration:underline;display:inline-block;width:46.80px;font-size:11px;letter-spacing:0.70px">包裝稱重</i></div>
<div class="t" style="left:436.63px;top:619.01px;font-size:11.50px;"><span style="letter-spacing:-0.83px;margin-left:-0.42px;margin-right:0.42px">P</span></div>
<div class="t" style="left:499.64px;top:619.01px;font-size:11.50px;"><span style="letter-spacing:1.42px;margin-left:0.71px;margin-right:-0.71px">1</span></div>
<div class="t" style="left:543.43px;top:619.01px;font-size:11.50px;"><span style="letter-spacing:1.42px;margin-left:0.71px;margin-right:-0.71px">485</span><i style="display:inline-block;width:23.40px;font-size:11px;letter-spacing:0.70px">掃描</i></div>
<div class="t" style="left:606.15px;top:619.01px;font-size:11.50px;"><i style="display:inline-block;width:35.10px;font-size:11px;letter-spacing:0.70px">姚磊鑫</i><span style="letter-spacing:1.35px;margin-left:0.67px;margin-right:-0.67px">(80002840)</span></div>
<div class="t" style="left:723.10px;top:619.01px;font-size:11.50px;"><span style="letter-spacing:1.37px;margin-left:0.69px;margin-right:-0.69px">2011-03-12&nbsp;06:02:41</span></div>
<div class="t" style="left:904.00px;top:619.01px;font-size:11.50px;"><span style="letter-spacing:1.37px;margin-left:0.69px;margin-right:-0.69px">2011-03-12&nbsp;06:02:41</span></div>
<div class="t" style="left:1084.70px;top:619.01px;font-size:11.50px;"><span style="letter-spacing:1.53px;margin-left:0.77px;margin-right:-0.77px">00:06:54||02:25:12</span></div>
<svg class="ic" style="left:17px;top:644px" width="13" height="13" viewBox="0 0 13 13"><rect x="0.5" y="0.5" width="12" height="12" rx="2.6" fill="#f1f5f8" stroke="#8a9096"/><path d="M3.3 6.4 L6.5 3.6 L9.7 6.4 M3.3 10 L6.5 7.2 L9.7 10" fill="none" stroke="#434a52" stroke-width="1.15"/></svg>
<div class="t h" style="left:36.00px;top:647.15px;font-size:13.42px;font-weight:bold;color:#1b2874;-webkit-text-stroke:0.15px currentColor;"><i style="display:inline-block;width:54.60px;font-size:12px;letter-spacing:1.65px">條碼組件</i></div>
<div class="th" style="left:18.0px;top:663.8px;width:1097.5px;height:23.6px"></div>
<div class="r1" style="left:18.0px;top:687.4px;width:1097.5px;height:24.0px"></div>
<div class="r2" style="left:18.0px;top:711.4px;width:1097.5px;height:24.0px"></div>
<div class="r1" style="left:18.0px;top:735.4px;width:1097.5px;height:24.0px"></div>
<div class="r2" style="left:18.0px;top:759.4px;width:1097.5px;height:24.0px"></div>
<div class="r1" style="left:18.0px;top:783.4px;width:1097.5px;height:24.0px"></div>
<div class="r2" style="left:18.0px;top:807.4px;width:1097.5px;height:24.0px"></div>
<div class="r1" style="left:18.0px;top:831.4px;width:1097.5px;height:24.0px"></div>
<div class="r2" style="left:18.0px;top:855.4px;width:1097.5px;height:24.0px"></div>
<div class="r1" style="left:18.0px;top:879.4px;width:1097.5px;height:24.0px"></div>
<div class="r2" style="left:18.0px;top:903.4px;width:1097.5px;height:24.0px"></div>
<div class="r1" style="left:18.0px;top:927.4px;width:1097.5px;height:24.0px"></div>
<div class="r2" style="left:18.0px;top:951.4px;width:1097.5px;height:24.0px"></div>
<div class="hl" style="left:18.0px;top:686.4px;width:1097.5px"></div>
<div class="hl" style="left:18.0px;top:710.4px;width:1097.5px"></div>
<div class="hl" style="left:18.0px;top:734.4px;width:1097.5px"></div>
<div class="hl" style="left:18.0px;top:758.4px;width:1097.5px"></div>
<div class="hl" style="left:18.0px;top:782.4px;width:1097.5px"></div>
<div class="hl" style="left:18.0px;top:806.4px;width:1097.5px"></div>
<div class="hl" style="left:18.0px;top:830.4px;width:1097.5px"></div>
<div class="hl" style="left:18.0px;top:854.4px;width:1097.5px"></div>
<div class="hl" style="left:18.0px;top:878.4px;width:1097.5px"></div>
<div class="hl" style="left:18.0px;top:902.4px;width:1097.5px"></div>
<div class="hl" style="left:18.0px;top:926.4px;width:1097.5px"></div>
<div class="hl" style="left:18.0px;top:950.4px;width:1097.5px"></div>
<div class="hl" style="left:18.0px;top:974.4px;width:1097.5px"></div>
<div class="vlh" style="left:197.6px;top:663.8px;height:23.6px"></div>
<div class="vl" style="left:197.6px;top:687.4px;height:288.0px"></div>
<div class="vlh" style="left:319.3px;top:663.8px;height:23.6px"></div>
<div class="vl" style="left:319.3px;top:687.4px;height:288.0px"></div>
<div class="vlh" style="left:422.0px;top:663.8px;height:23.6px"></div>
<div class="vl" style="left:422.0px;top:687.4px;height:288.0px"></div>
<div class="vlh" style="left:678.1px;top:663.8px;height:23.6px"></div>
<div class="vl" style="left:678.1px;top:687.4px;height:288.0px"></div>
<div class="vlh" style="left:709.2px;top:663.8px;height:23.6px"></div>
<div class="vl" style="left:709.2px;top:687.4px;height:288.0px"></div>
<div class="vlh" style="left:830.3px;top:663.8px;height:23.6px"></div>
<div class="vl" style="left:830.3px;top:687.4px;height:288.0px"></div>
<div class="vlh" style="left:1011.3px;top:663.8px;height:23.6px"></div>
<div class="vl" style="left:1011.3px;top:687.4px;height:288.0px"></div>
<div class="vl" style="left:1114.5px;top:663.8px;height:311.6px"></div>
<div class="t" style="left:96.60px;top:668.21px;font-size:11.50px;font-weight:bold;color:#ffffff;"><i style="display:inline-block;width:23.40px;font-size:12px;letter-spacing:-0.30px">流程</i></div>
<div class="t" style="left:247.75px;top:668.21px;font-size:11.50px;font-weight:bold;color:#ffffff;"><i style="display:inline-block;width:23.40px;font-size:12px;letter-spacing:-0.30px">站別</i></div>
<div class="t" style="left:348.25px;top:668.21px;font-size:11.50px;font-weight:bold;color:#ffffff;"><i style="display:inline-block;width:46.80px;font-size:12px;letter-spacing:-0.30px">組件類別</i></div>
<div class="t" style="left:527.65px;top:668.21px;font-size:11.50px;font-weight:bold;color:#ffffff;"><i style="display:inline-block;width:46.80px;font-size:12px;letter-spacing:-0.30px">組件條碼</i></div>
<div class="t" style="left:682.95px;top:668.21px;font-size:11.50px;font-weight:bold;color:#ffffff;"><i style="display:inline-block;width:23.40px;font-size:12px;letter-spacing:-0.30px">料號</i></div>
<div class="t" style="left:753.20px;top:668.21px;font-size:11.50px;font-weight:bold;color:#ffffff;"><i style="display:inline-block;width:35.10px;font-size:12px;letter-spacing:-0.30px">操作员</i></div>
<div class="t" style="left:898.40px;top:668.21px;font-size:11.50px;font-weight:bold;color:#ffffff;"><i style="display:inline-block;width:46.80px;font-size:12px;letter-spacing:-0.30px">投產時間</i></div>
<div class="t" style="left:1052.20px;top:668.21px;font-size:11.50px;font-weight:bold;color:#ffffff;"><i style="display:inline-block;width:23.40px;font-size:12px;letter-spacing:-0.30px">狀態</i></div>
<div class="t" style="left:20.00px;top:692.81px;font-size:11.50px;"><span style="letter-spacing:0.69px;margin-left:0.34px;margin-right:-0.34px">MBMET_001</span></div>
<div class="t" style="left:200.60px;top:691.31px;font-size:11.50px;"><i style="display:inline-block;width:46.80px;font-size:11px;letter-spacing:0.70px">電壓測試</i></div>
<div class="t" style="left:322.30px;top:691.31px;font-size:11.50px;"><i style="display:inline-block;width:35.10px;font-size:11px;letter-spacing:0.70px">機臺號</i></div>
<div class="t" style="left:425.00px;top:692.81px;font-size:11.50px;"><span style="letter-spacing:0.66px;margin-left:0.33px;margin-right:-0.33px">Voltage-Test1</span></div>
<div class="t" style="left:681.10px;top:692.81px;font-size:11.50px;"><span style="letter-spacing:0.77px;margin-left:0.39px;margin-right:-0.39px">N/A</span></div>
<div class="t" style="left:717.05px;top:692.81px;font-size:11.50px;"><i style="display:inline-block;width:35.10px;font-size:11px;letter-spacing:0.70px">彭國豔</i><span style="letter-spacing:1.35px;margin-left:0.67px;margin-right:-0.67px">(00062452)</span></div>
<div class="t" style="left:833.30px;top:692.81px;font-size:11.50px;"><span style="letter-spacing:1.37px;margin-left:0.69px;margin-right:-0.69px">2011-03-12&nbsp;04:54:23</span></div>
<div class="t" style="left:20.00px;top:716.81px;font-size:11.50px;"><span style="letter-spacing:0.69px;margin-left:0.34px;margin-right:-0.34px">MBMET_001</span></div>
<div class="t" style="left:200.60px;top:715.31px;font-size:11.50px;"><i style="display:inline-block;width:46.80px;font-size:11px;letter-spacing:0.70px">電壓測試</i></div>
<div class="t" style="left:322.30px;top:715.31px;font-size:11.50px;"><i style="display:inline-block;width:58.50px;font-size:11px;letter-spacing:0.70px">電壓測試值</i></div>
<div class="t" style="left:425.00px;top:716.81px;font-size:11.50px;"><span style="letter-spacing:1.24px;margin-left:0.62px;margin-right:-0.62px">C723+:1.13V</span></div>
<div class="t" style="left:681.10px;top:716.81px;font-size:11.50px;"><span style="letter-spacing:0.77px;margin-left:0.39px;margin-right:-0.39px">N/A</span></div>
<div class="t" style="left:717.05px;top:716.81px;font-size:11.50px;"><i style="display:inline-block;width:35.10px;font-size:11px;letter-spacing:0.70px">彭國豔</i><span style="letter-spacing:1.35px;margin-left:0.67px;margin-right:-0.67px">(00062452)</span></div>
<div class="t" style="left:833.30px;top:716.81px;font-size:11.50px;"><span style="letter-spacing:1.37px;margin-left:0.69px;margin-right:-0.69px">2011-03-12&nbsp;04:54:23</span></div>
<div class="t" style="left:20.00px;top:740.81px;font-size:11.50px;"><span style="letter-spacing:0.69px;margin-left:0.34px;margin-right:-0.34px">MBMET_001</span></div>
<div class="t" style="left:200.60px;top:739.31px;font-size:11.50px;"><i style="display:inline-block;width:46.80px;font-size:11px;letter-spacing:0.70px">電壓測試</i></div>
<div class="t" style="left:322.30px;top:739.31px;font-size:11.50px;"><i style="display:inline-block;width:58.50px;font-size:11px;letter-spacing:0.70px">電壓測試值</i></div>
<div class="t" style="left:425.00px;top:740.81px;font-size:11.50px;"><span style="letter-spacing:1.24px;margin-left:0.62px;margin-right:-0.62px">C163+:1.53V</span></div>
<div class="t" style="left:681.10px;top:740.81px;font-size:11.50px;"><span style="letter-spacing:0.77px;margin-left:0.39px;margin-right:-0.39px">N/A</span></div>
<div class="t" style="left:717.05px;top:740.81px;font-size:11.50px;"><i style="display:inline-block;width:35.10px;font-size:11px;letter-spacing:0.70px">彭國豔</i><span style="letter-spacing:1.35px;margin-left:0.67px;margin-right:-0.67px">(00062452)</span></div>
<div class="t" style="left:833.30px;top:740.81px;font-size:11.50px;"><span style="letter-spacing:1.37px;margin-left:0.69px;margin-right:-0.69px">2011-03-12&nbsp;04:54:23</span></div>
<div class="t" style="left:20.00px;top:764.81px;font-size:11.50px;"><span style="letter-spacing:0.69px;margin-left:0.34px;margin-right:-0.34px">MBMET_001</span></div>
<div class="t" style="left:200.60px;top:763.31px;font-size:11.50px;"><i style="display:inline-block;width:46.80px;font-size:11px;letter-spacing:0.70px">電壓測試</i></div>
<div class="t" style="left:322.30px;top:763.31px;font-size:11.50px;"><i style="display:inline-block;width:58.50px;font-size:11px;letter-spacing:0.70px">電壓測試值</i></div>
<div class="t" style="left:425.00px;top:764.81px;font-size:11.50px;"><span style="letter-spacing:0.97px;margin-left:0.49px;margin-right:-0.49px">Q39.D:1.09V</span></div>
<div class="t" style="left:681.10px;top:764.81px;font-size:11.50px;"><span style="letter-spacing:0.77px;margin-left:0.39px;margin-right:-0.39px">N/A</span></div>
<div class="t" style="left:717.05px;top:764.81px;font-size:11.50px;"><i style="display:inline-block;width:35.10px;font-size:11px;letter-spacing:0.70px">彭國豔</i><span style="letter-spacing:1.35px;margin-left:0.67px;margin-right:-0.67px">(00062452)</span></div>
<div class="t" style="left:833.30px;top:764.81px;font-size:11.50px;"><span style="letter-spacing:1.37px;margin-left:0.69px;margin-right:-0.69px">2011-03-12&nbsp;04:54:23</span></div>
<div class="t" style="left:20.00px;top:788.81px;font-size:11.50px;"><span style="letter-spacing:0.69px;margin-left:0.34px;margin-right:-0.34px">MBMET_001</span></div>
<div class="t" style="left:200.60px;top:787.31px;font-size:11.50px;"><i style="display:inline-block;width:46.80px;font-size:11px;letter-spacing:0.70px">電壓測試</i></div>
<div class="t" style="left:322.30px;top:787.31px;font-size:11.50px;"><i style="display:inline-block;width:58.50px;font-size:11px;letter-spacing:0.70px">電壓測試值</i></div>
<div class="t" style="left:425.00px;top:788.81px;font-size:11.50px;"><span style="letter-spacing:0.92px;margin-left:0.46px;margin-right:-0.46px">Q60.S&nbsp;:1.80V</span></div>
<div class="t" style="left:681.10px;top:788.81px;font-size:11.50px;"><span style="letter-spacing:0.77px;margin-left:0.39px;margin-right:-0.39px">N/A</span></div>
<div class="t" style="left:717.05px;top:788.81px;font-size:11.50px;"><i style="display:inline-block;width:35.10px;font-size:11px;letter-spacing:0.70px">彭國豔</i><span style="letter-spacing:1.35px;margin-left:0.67px;margin-right:-0.67px">(00062452)</span></div>
<div class="t" style="left:833.30px;top:788.81px;font-size:11.50px;"><span style="letter-spacing:1.37px;margin-left:0.69px;margin-right:-0.69px">2011-03-12&nbsp;04:54:23</span></div>
<div class="t" style="left:20.00px;top:812.81px;font-size:11.50px;"><span style="letter-spacing:0.69px;margin-left:0.34px;margin-right:-0.34px">MBMET_001</span></div>
<div class="t" style="left:200.60px;top:811.31px;font-size:11.50px;"><i style="display:inline-block;width:46.80px;font-size:11px;letter-spacing:0.70px">電壓測試</i></div>
<div class="t" style="left:322.30px;top:811.31px;font-size:11.50px;"><i style="display:inline-block;width:58.50px;font-size:11px;letter-spacing:0.70px">電壓測試值</i></div>
<div class="t" style="left:425.00px;top:812.81px;font-size:11.50px;"><span style="letter-spacing:1.24px;margin-left:0.62px;margin-right:-0.62px">C458+:1.08V</span></div>
<div class="t" style="left:681.10px;top:812.81px;font-size:11.50px;"><span style="letter-spacing:0.77px;margin-left:0.39px;margin-right:-0.39px">N/A</span></div>
<div class="t" style="left:717.05px;top:812.81px;font-size:11.50px;"><i style="display:inline-block;width:35.10px;font-size:11px;letter-spacing:0.70px">彭國豔</i><span style="letter-spacing:1.35px;margin-left:0.67px;margin-right:-0.67px">(00062452)</span></div>
<div class="t" style="left:833.30px;top:812.81px;font-size:11.50px;"><span style="letter-spacing:1.37px;margin-left:0.69px;margin-right:-0.69px">2011-03-12&nbsp;04:54:23</span></div>
<div class="t" style="left:20.00px;top:836.81px;font-size:11.50px;"><span style="letter-spacing:0.69px;margin-left:0.34px;margin-right:-0.34px">MBMET_001</span></div>
<div class="t" style="left:200.60px;top:835.31px;font-size:11.50px;"><i style="display:inline-block;width:46.80px;font-size:11px;letter-spacing:0.70px">電壓測試</i></div>
<div class="t" style="left:322.30px;top:835.31px;font-size:11.50px;"><i style="display:inline-block;width:58.50px;font-size:11px;letter-spacing:0.70px">電壓測試值</i></div>
<div class="t" style="left:425.00px;top:836.81px;font-size:11.50px;"><span style="letter-spacing:0.71px;margin-left:0.35px;margin-right:-0.35px">VBAT:3.37V</span></div>
<div class="t" style="left:681.10px;top:836.81px;font-size:11.50px;"><span style="letter-spacing:0.77px;margin-left:0.39px;margin-right:-0.39px">N/A</span></div>
<div class="t" style="left:717.05px;top:836.81px;font-size:11.50px;"><i style="display:inline-block;width:35.10px;font-size:11px;letter-spacing:0.70px">彭國豔</i><span style="letter-spacing:1.35px;margin-left:0.67px;margin-right:-0.67px">(00062452)</span></div>
<div class="t" style="left:833.30px;top:836.81px;font-size:11.50px;"><span style="letter-spacing:1.37px;margin-left:0.69px;margin-right:-0.69px">2011-03-12&nbsp;04:54:23</span></div>
<div class="t" style="left:20.00px;top:860.81px;font-size:11.50px;"><span style="letter-spacing:0.69px;margin-left:0.34px;margin-right:-0.34px">MBMET_001</span></div>
<div class="t" style="left:200.60px;top:859.31px;font-size:11.50px;"><i style="display:inline-block;width:46.80px;font-size:11px;letter-spacing:0.70px">電壓測試</i></div>
<div class="t" style="left:322.30px;top:859.31px;font-size:11.50px;"><i style="display:inline-block;width:58.50px;font-size:11px;letter-spacing:0.70px">電壓測試值</i></div>
<div class="t" style="left:425.00px;top:860.81px;font-size:11.50px;"><span style="letter-spacing:1.22px;margin-left:0.61px;margin-right:-0.61px">C45+:0.78V</span></div>
<div class="t" style="left:681.10px;top:860.81px;font-size:11.50px;"><span style="letter-spacing:0.77px;margin-left:0.39px;margin-right:-0.39px">N/A</span></div>
<div class="t" style="left:717.05px;top:860.81px;font-size:11.50px;"><i style="display:inline-block;width:35.10px;font-size:11px;letter-spacing:0.70px">彭國豔</i><span style="letter-spacing:1.35px;margin-left:0.67px;margin-right:-0.67px">(00062452)</span></div>
<div class="t" style="left:833.30px;top:860.81px;font-size:11.50px;"><span style="letter-spacing:1.37px;margin-left:0.69px;margin-right:-0.69px">2011-03-12&nbsp;04:54:23</span></div>
<div class="t" style="left:20.00px;top:884.81px;font-size:11.50px;"><span style="letter-spacing:0.69px;margin-left:0.34px;margin-right:-0.34px">MBMET_001</span></div>
<div class="t" style="left:200.60px;top:883.31px;font-size:11.50px;"><i style="display:inline-block;width:23.40px;font-size:11px;letter-spacing:0.70px">功能</i></div>
<div class="t" style="left:322.30px;top:883.31px;font-size:11.50px;"><i style="display:inline-block;width:35.10px;font-size:11px;letter-spacing:0.70px">機臺號</i></div>
<div class="t" style="left:425.00px;top:884.81px;font-size:11.50px;"><span style="letter-spacing:0.93px;margin-left:0.47px;margin-right:-0.47px">A2E-03</span></div>
<div class="t" style="left:681.10px;top:884.81px;font-size:11.50px;"><span style="letter-spacing:0.77px;margin-left:0.39px;margin-right:-0.39px">N/A</span></div>
<div class="t" style="left:717.05px;top:884.81px;font-size:11.50px;"><i style="display:inline-block;width:35.10px;font-size:11px;letter-spacing:0.70px">王秀娟</i><span style="letter-spacing:1.35px;margin-left:0.67px;margin-right:-0.67px">(00040768)</span></div>
<div class="t" style="left:833.30px;top:884.81px;font-size:11.50px;"><span style="letter-spacing:1.37px;margin-left:0.69px;margin-right:-0.69px">2011-03-12&nbsp;05:10:27</span></div>
<div class="t" style="left:20.00px;top:908.81px;font-size:11.50px;"><span style="letter-spacing:0.69px;margin-left:0.34px;margin-right:-0.34px">MBMET_001</span></div>
<div class="t" style="left:200.60px;top:907.31px;font-size:11.50px;"><i style="display:inline-block;width:23.40px;font-size:11px;letter-spacing:0.70px">功能</i></div>
<div class="t" style="left:322.30px;top:908.81px;font-size:11.50px;"><span style="letter-spacing:0.46px;margin-left:0.23px;margin-right:-0.23px">BIOS</span></div>
<div class="t" style="left:425.00px;top:908.81px;font-size:11.50px;"><span style="letter-spacing:1.02px;margin-left:0.51px;margin-right:-0.51px">V10.3</span></div>
<div class="t" style="left:681.10px;top:908.81px;font-size:11.50px;"><span style="letter-spacing:0.77px;margin-left:0.39px;margin-right:-0.39px">N/A</span></div>
<div class="t" style="left:717.05px;top:908.81px;font-size:11.50px;"><i style="display:inline-block;width:35.10px;font-size:11px;letter-spacing:0.70px">王秀娟</i><span style="letter-spacing:1.35px;margin-left:0.67px;margin-right:-0.67px">(00040768)</span></div>
<div class="t" style="left:833.30px;top:908.81px;font-size:11.50px;"><span style="letter-spacing:1.37px;margin-left:0.69px;margin-right:-0.69px">2011-03-12&nbsp;05:10:27</span></div>
<div class="t" style="left:20.00px;top:932.81px;font-size:11.50px;"><span style="letter-spacing:0.69px;margin-left:0.34px;margin-right:-0.34px">MBMET_001</span></div>
<div class="t" style="left:200.60px;top:931.31px;font-size:11.50px;"><i style="display:inline-block;width:23.40px;font-size:11px;letter-spacing:0.70px">功能</i></div>
<div class="t" style="left:322.30px;top:932.81px;font-size:11.50px;"><span style="letter-spacing:0.25px;margin-left:0.13px;margin-right:-0.13px">MAC&nbsp;ADDRESS1</span></div>
<div class="t" style="left:425.00px;top:932.81px;font-size:11.50px;"><span style="letter-spacing:0.94px;margin-left:0.47px;margin-right:-0.47px">6C626D3930FA</span></div>
<div class="t" style="left:681.10px;top:932.81px;font-size:11.50px;"><span style="letter-spacing:0.77px;margin-left:0.39px;margin-right:-0.39px">N/A</span></div>
<div class="t" style="left:717.05px;top:932.81px;font-size:11.50px;"><i style="display:inline-block;width:35.10px;font-size:11px;letter-spacing:0.70px">王秀娟</i><span style="letter-spacing:1.35px;margin-left:0.67px;margin-right:-0.67px">(00040768)</span></div>
<div class="t" style="left:833.30px;top:932.81px;font-size:11.50px;"><span style="letter-spacing:1.37px;margin-left:0.69px;margin-right:-0.69px">2011-03-12&nbsp;05:10:27</span></div>
<div class="t" style="left:20.00px;top:956.81px;font-size:11.50px;"><span style="letter-spacing:0.69px;margin-left:0.34px;margin-right:-0.34px">MBMET_001</span></div>
<div class="t" style="left:200.60px;top:955.31px;font-size:11.50px;"><i style="display:inline-block;width:23.40px;font-size:11px;letter-spacing:0.70px">功能</i></div>
<div class="t" style="left:322.30px;top:956.81px;font-size:11.50px;"><span style="letter-spacing:0.78px;margin-left:0.39px;margin-right:-0.39px">IFB_GUID1</span></div>
<div class="t" style="left:425.00px;top:956.81px;font-size:11.50px;"><span style="letter-spacing:1.24px;margin-left:0.62px;margin-right:-0.62px">000000000000000000006C626D3930FA</span></div>
<div class="t" style="left:681.10px;top:956.81px;font-size:11.50px;"><span style="letter-spacing:0.77px;margin-left:0.39px;margin-right:-0.39px">N/A</span></div>
<div class="t" style="left:717.05px;top:956.81px;font-size:11.50px;"><i style="display:inline-block;width:35.10px;font-size:11px;letter-spacing:0.70px">王秀娟</i><span style="letter-spacing:1.35px;margin-left:0.67px;margin-right:-0.67px">(00040768)</span></div>
<div class="t" style="left:833.30px;top:956.81px;font-size:11.50px;"><span style="letter-spacing:1.37px;margin-left:0.69px;margin-right:-0.69px">2011-03-12&nbsp;05:10:27</span></div>
<div style="position:absolute;left:17px;top:976px;width:5px;height:3px;border:1px solid #c8c8c8;border-top:0;box-sizing:border-box"></div>
<svg class="ic" style="left:17px;top:985.3px" width="13" height="13" viewBox="0 0 13 13"><rect x="0.5" y="0.5" width="12" height="12" rx="2.6" fill="#f1f5f8" stroke="#8a9096"/><path d="M3.3 6.4 L6.5 3.6 L9.7 6.4 M3.3 10 L6.5 7.2 L9.7 10" fill="none" stroke="#434a52" stroke-width="1.15"/></svg>
<div class="t h" style="left:36.00px;top:988.05px;font-size:13.42px;font-weight:bold;color:#1b2874;-webkit-text-stroke:0.15px currentColor;"><i style="display:inline-block;width:54.60px;font-size:12px;letter-spacing:1.65px">庫房追蹤</i></div>
<div class="t" style="left:17.00px;top:1005.01px;font-size:11.50px;"><i style="display:inline-block;width:46.80px;font-size:11px;letter-spacing:0.70px">內部條碼</i><span style="letter-spacing:1.33px;margin-left:0.66px;margin-right:-0.66px">:B316537463</span></div>
<div class="t" style="left:162.50px;top:1005.01px;font-size:11.50px;"><i style="display:inline-block;width:35.10px;font-size:11px;letter-spacing:0.70px">棧板號</i><span style="letter-spacing:1.44px;margin-left:0.72px;margin-right:-0.72px">:201103110204</span></div>
<div class="t" style="left:312.00px;top:1005.01px;font-size:11.50px;"><span style="letter-spacing:0.78px;margin-left:0.39px;margin-right:-0.39px">Delivery:</span></div>
<div class="t" style="left:380.00px;top:1005.01px;font-size:11.50px;"><i style="display:inline-block;width:46.80px;font-size:11px;letter-spacing:0.70px">在庫狀態</i><span style="letter-spacing:1.69px;margin-left:0.84px;margin-right:-0.84px">:</span><i style="display:inline-block;width:23.40px;font-size:11px;letter-spacing:0.70px">在庫</i></div>
<div class="t" style="left:17.00px;top:1020.21px;font-size:11.50px;"><i style="display:inline-block;width:23.40px;font-size:11px;letter-spacing:0.70px">倉別</i><span style="letter-spacing:0.29px;margin-left:0.14px;margin-right:-0.14px">:FGOBMH</span></div>
<div class="t" style="left:112.20px;top:1020.21px;font-size:11.50px;"><i style="display:inline-block;width:23.40px;font-size:11px;letter-spacing:0.70px">儲位</i><span style="letter-spacing:1.69px;margin-left:0.84px;margin-right:-0.84px">:</span></div>
<div class="t" style="left:17.00px;top:1035.51px;font-size:11.50px;"><i style="display:inline-block;width:35.10px;font-size:11px;letter-spacing:0.70px">訂單號</i><span style="letter-spacing:1.45px;margin-left:0.73px;margin-right:-0.73px">:10632051</span></div>
<div class="t" style="left:134.20px;top:1035.51px;font-size:11.50px;"><i style="display:inline-block;width:46.80px;font-size:11px;letter-spacing:0.70px">客戶名稱</i><span style="letter-spacing:1.69px;margin-left:0.84px;margin-right:-0.84px">:</span></div>
<div class="t" style="left:202.30px;top:1035.51px;font-size:11.50px;"><i style="display:inline-block;width:46.80px;font-size:11px;letter-spacing:0.70px">出貨區域</i><span style="letter-spacing:1.69px;margin-left:0.84px;margin-right:-0.84px">:</span></div>
<div class="th" style="left:17.9px;top:1051.0px;width:961.8px;height:24.0px"></div>
<div class="r1" style="left:17.9px;top:1075.0px;width:961.8px;height:25.2px"></div>
<div class="hl" style="left:17.9px;top:1074.0px;width:961.8px"></div>
<div class="hl" style="left:17.9px;top:1099.2px;width:961.8px"></div>
<div class="vlh" style="left:107.6px;top:1051.0px;height:24.0px"></div>
<div class="vl" style="left:107.6px;top:1075.0px;height:25.2px"></div>
<div class="vlh" style="left:182.5px;top:1051.0px;height:24.0px"></div>
<div class="vl" style="left:182.5px;top:1075.0px;height:25.2px"></div>
<div class="vlh" style="left:249.8px;top:1051.0px;height:24.0px"></div>
<div class="vl" style="left:249.8px;top:1075.0px;height:25.2px"></div>
<div class="vlh" style="left:305.5px;top:1051.0px;height:24.0px"></div>
<div class="vl" style="left:305.5px;top:1075.0px;height:25.2px"></div>
<div class="vlh" style="left:361.5px;top:1051.0px;height:24.0px"></div>
<div class="vl" style="left:361.5px;top:1075.0px;height:25.2px"></div>
<div class="vlh" style="left:459.8px;top:1051.0px;height:24.0px"></div>
<div class="vl" style="left:459.8px;top:1075.0px;height:25.2px"></div>
<div class="vlh" style="left:515.5px;top:1051.0px;height:24.0px"></div>
<div class="vl" style="left:515.5px;top:1075.0px;height:25.2px"></div>
<div class="vlh" style="left:571.5px;top:1051.0px;height:24.0px"></div>
<div class="vl" style="left:571.5px;top:1075.0px;height:25.2px"></div>
<div class="vlh" style="left:628.2px;top:1051.0px;height:24.0px"></div>
<div class="vl" style="left:628.2px;top:1075.0px;height:25.2px"></div>
<div class="vlh" style="left:671.4px;top:1051.0px;height:24.0px"></div>
<div class="vl" style="left:671.4px;top:1075.0px;height:25.2px"></div>
<div class="vlh" style="left:728.2px;top:1051.0px;height:24.0px"></div>
<div class="vl" style="left:728.2px;top:1075.0px;height:25.2px"></div>
<div class="vlh" style="left:840.4px;top:1051.0px;height:24.0px"></div>
<div class="vl" style="left:840.4px;top:1075.0px;height:25.2px"></div>
<div class="vl" style="left:978.7px;top:1051.0px;height:49.2px"></div>
<div class="t" style="left:45.70px;top:1055.21px;font-size:11.50px;font-weight:bold;color:#ffffff;"><i style="display:inline-block;width:35.10px;font-size:12px;letter-spacing:-0.30px">交易號</i></div>
<div class="t" style="left:122.65px;top:1055.21px;font-size:11.50px;font-weight:bold;color:#ffffff;"><i style="display:inline-block;width:46.80px;font-size:12px;letter-spacing:-0.30px">交易類型</i></div>
<div class="t" style="left:193.75px;top:1055.21px;font-size:11.50px;font-weight:bold;color:#ffffff;"><i style="display:inline-block;width:46.80px;font-size:12px;letter-spacing:-0.30px">包裝箱號</i></div>
<div class="t" style="left:255.25px;top:1055.21px;font-size:11.50px;font-weight:bold;color:#ffffff;"><i style="display:inline-block;width:46.80px;font-size:12px;letter-spacing:-0.30px">入庫箱重</i></div>
<div class="t" style="left:311.10px;top:1055.21px;font-size:11.50px;font-weight:bold;color:#ffffff;"><i style="display:inline-block;width:46.80px;font-size:12px;letter-spacing:-0.30px">出庫箱重</i></div>
<div class="t" style="left:394.10px;top:1055.21px;font-size:11.50px;font-weight:bold;color:#ffffff;"><i style="display:inline-block;width:35.10px;font-size:12px;letter-spacing:-0.30px">棧板號</i></div>
<div class="t" style="left:465.25px;top:1055.21px;font-size:11.50px;font-weight:bold;color:#ffffff;"><i style="display:inline-block;width:46.80px;font-size:12px;letter-spacing:-0.30px">入庫棧重</i></div>
<div class="t" style="left:521.10px;top:1055.21px;font-size:11.50px;font-weight:bold;color:#ffffff;"><i style="display:inline-block;width:46.80px;font-size:12px;letter-spacing:-0.30px">出庫棧重</i></div>
<div class="t" style="left:577.21px;top:1055.21px;font-size:11.50px;font-weight:bold;color:#ffffff;"><span style="letter-spacing:1.54px;margin-left:0.77px;margin-right:-0.77px">DN/WO</span></div>
<div class="t" style="left:633.25px;top:1055.21px;font-size:11.50px;font-weight:bold;color:#ffffff;"><i style="display:inline-block;width:35.10px;font-size:12px;letter-spacing:-0.30px">轉出倉</i></div>
<div class="t" style="left:683.25px;top:1055.21px;font-size:11.50px;font-weight:bold;color:#ffffff;"><i style="display:inline-block;width:35.10px;font-size:12px;letter-spacing:-0.30px">轉入倉</i></div>
<div class="t" style="left:767.75px;top:1055.21px;font-size:11.50px;font-weight:bold;color:#ffffff;"><i style="display:inline-block;width:35.10px;font-size:12px;letter-spacing:-0.30px">操作员</i></div>
<div class="t" style="left:887.15px;top:1055.21px;font-size:11.50px;font-weight:bold;color:#ffffff;"><i style="display:inline-block;width:46.80px;font-size:12px;letter-spacing:-0.30px">建置時間</i></div>
<div class="t" style="left:19.90px;top:1081.11px;font-size:11.50px;"><span style="letter-spacing:1.13px;margin-left:0.57px;margin-right:-0.57px">RB113774952</span></div>
<div class="t" style="left:110.60px;top:1079.61px;font-size:11.50px;"><i style="display:inline-block;width:70.20px;font-size:11px;letter-spacing:0.70px">工單完工入庫</i></div>
<div class="t" style="left:185.50px;top:1081.11px;font-size:11.50px;"><span style="letter-spacing:1.18px;margin-left:0.59px;margin-right:-0.59px">B38Z0349</span></div>
<div class="t" style="left:364.50px;top:1081.11px;font-size:11.50px;"><span style="letter-spacing:1.42px;margin-left:0.71px;margin-right:-0.71px">201103110204</span></div>
<div class="t" style="left:462.80px;top:1081.11px;font-size:11.50px;"><span style="letter-spacing:1.30px;margin-left:0.65px;margin-right:-0.65px">323.90</span></div>
<div class="t" style="left:674.40px;top:1081.11px;font-size:11.50px;"><span style="letter-spacing:0.06px;margin-left:0.03px;margin-right:-0.03px">FGOBMH</span></div>
<div class="t" style="left:731.20px;top:1081.11px;font-size:11.50px;"><i style="display:inline-block;width:35.10px;font-size:11px;letter-spacing:0.70px">段恩國</i><span style="letter-spacing:1.35px;margin-left:0.67px;margin-right:-0.67px">(00060255)</span></div>
<div class="t" style="left:843.40px;top:1081.11px;font-size:11.50px;"><span style="letter-spacing:1.37px;margin-left:0.69px;margin-right:-0.69px">2011-03-12&nbsp;09:29:53</span></div>
</body></html>
